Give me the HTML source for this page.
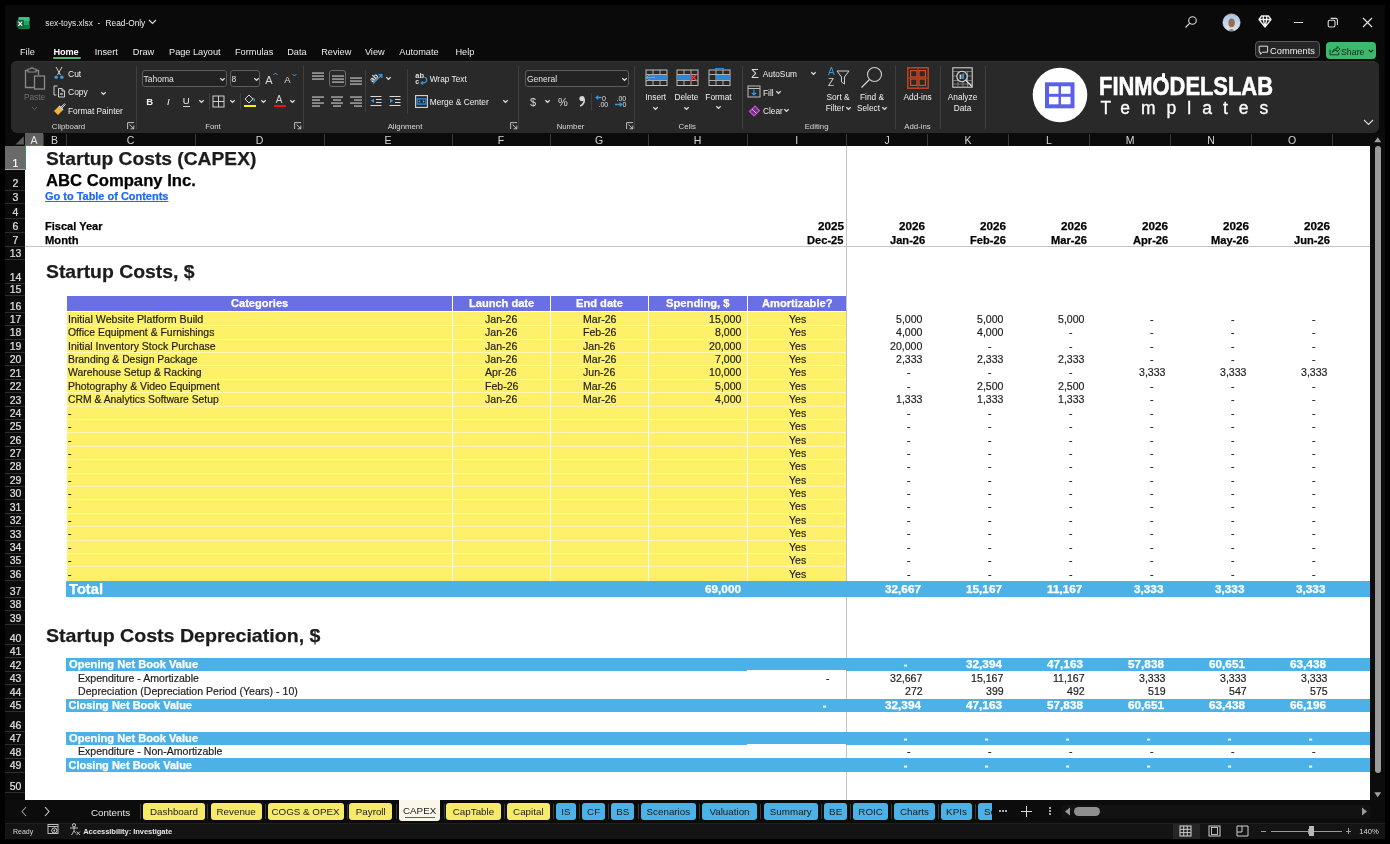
<!DOCTYPE html><html><head><meta charset="utf-8"><style>
html,body{margin:0;padding:0;}
body{width:1390px;height:844px;background:#000;position:relative;overflow:hidden;font-family:"Liberation Sans",sans-serif;}
.t{position:absolute;white-space:pre;}
#root{position:absolute;left:0;top:0;width:1390px;height:844px;will-change:transform;}
.r{position:absolute;}
svg{position:absolute;overflow:visible;}
</style></head><body><div id="root">
<div class="r" style="left:5px;top:5px;width:1380.00px;height:834.00px;background:#0a0a0a;"></div>
<svg style="left:16px;top:16px" width="14" height="14" viewBox="0 0 14 14"><rect x="2.5" y="1" width="11" height="12" rx="1.5" fill="#21a366"/><rect x="2.5" y="1" width="11" height="4" rx="1" fill="#33c481"/><rect x="2.5" y="9" width="11" height="4" rx="1" fill="#107c41"/><rect x="0.5" y="4" width="7.5" height="7.5" rx="1" fill="#185c37"/><path d="M2.3 5.6 L6.2 9.9 M6.2 5.6 L2.3 9.9" stroke="#fff" stroke-width="1.1"/></svg>
<div class="t" style="left:45.30px;top:19.00px;font-size:8.3px;line-height:8.3px;color:#e6e6e6;">sex-toys.xlsx</div>
<div class="t" style="left:97.50px;top:19.00px;font-size:8.3px;line-height:8.3px;color:#e6e6e6;">-</div>
<div class="t" style="left:105.60px;top:19.00px;font-size:8.3px;line-height:8.3px;color:#f0f0f0;">Read-Only</div>
<svg style="left:148px;top:19px" width="9" height="6"><path d="M1 1 L4.5 4.5 L8 1" stroke="#e0e0e0" stroke-width="1.1" fill="none"/></svg>
<svg style="left:1184px;top:15px" width="14" height="14"><circle cx="8.5" cy="5.5" r="3.8" stroke="#dcdcdc" stroke-width="1.1" fill="none"/><path d="M5.8 8.2 L1.5 12.5" stroke="#dcdcdc" stroke-width="1.2"/></svg>
<svg style="left:1222px;top:13px" width="19" height="19"><defs><clipPath id="av"><circle cx="9.5" cy="9.5" r="8.6"/></clipPath><linearGradient id="avg" x1="0" y1="0" x2="0" y2="1"><stop offset="0" stop-color="#a9c3e6"/><stop offset="1" stop-color="#d9e8ee"/></linearGradient></defs><circle cx="9.5" cy="9.5" r="8.6" fill="url(#avg)"/><g clip-path="url(#av)"><ellipse cx="9.6" cy="9.8" rx="3.2" ry="4.4" fill="#9c6a55"/><path d="M4 19 Q9.5 13.5 15 19 Z" fill="#7a4a40"/></g><circle cx="9.5" cy="9.5" r="8.6" stroke="#e6eef2" stroke-width="0.6" fill="none"/></svg>
<svg style="left:1258px;top:15px" width="14" height="13"><path d="M3.5 1 H10.5 L13 4.5 L7 12 L1 4.5 Z M1 4.5 H13 M5.3 1 V4.5 L7 12 M8.7 1 V4.5 L7 12" stroke="#f0f0f0" stroke-width="1.3" fill="none" stroke-linejoin="round"/></svg>
<div class="r" style="left:1294px;top:21.5px;width:8.50px;height:1.10px;background:#d8d8d8;"></div>
<svg style="left:1327px;top:17px" width="12" height="12"><rect x="1.2" y="3.2" width="6.8" height="6.8" rx="1.5" stroke="#dcdcdc" stroke-width="1.1" fill="none"/><path d="M3.6 1.4 H8.6 Q10.4 1.4 10.4 3.2 V8" stroke="#dcdcdc" stroke-width="1.1" fill="none"/></svg>
<svg style="left:1362px;top:17px" width="11" height="11"><path d="M1 1 L10 10 M10 1 L1 10" stroke="#e6e6e6" stroke-width="1.1"/></svg>
<div class="t" style="left:20.00px;top:48.00px;font-size:9.2px;line-height:9.2px;color:#ececec;">File</div>
<div class="t" style="left:53.50px;top:48.00px;font-size:9.2px;line-height:9.2px;font-weight:700;color:#ffffff;letter-spacing:-0.1px;">Home</div>
<div class="t" style="left:94.80px;top:48.00px;font-size:9.2px;line-height:9.2px;color:#ececec;">Insert</div>
<div class="t" style="left:132.80px;top:48.00px;font-size:9.2px;line-height:9.2px;color:#ececec;">Draw</div>
<div class="t" style="left:169.00px;top:48.00px;font-size:9.2px;line-height:9.2px;color:#ececec;">Page Layout</div>
<div class="t" style="left:235.00px;top:48.00px;font-size:9.2px;line-height:9.2px;color:#ececec;">Formulas</div>
<div class="t" style="left:287.20px;top:48.00px;font-size:9.2px;line-height:9.2px;color:#ececec;">Data</div>
<div class="t" style="left:321.20px;top:48.00px;font-size:9.2px;line-height:9.2px;color:#ececec;">Review</div>
<div class="t" style="left:364.90px;top:48.00px;font-size:9.2px;line-height:9.2px;color:#ececec;">View</div>
<div class="t" style="left:399.30px;top:48.00px;font-size:9.2px;line-height:9.2px;color:#ececec;">Automate</div>
<div class="t" style="left:455.40px;top:48.00px;font-size:9.2px;line-height:9.2px;color:#ececec;">Help</div>
<div class="r" style="left:53px;top:57px;width:28.00px;height:2.00px;background:#4fb56b;border-radius:1px;"></div>
<div class="r" style="left:1255px;top:41.2px;width:65.20px;height:17.30px;background:#262626;border:1px solid #5a5a5a;border-radius:4px;box-sizing:border-box;"></div>
<svg style="left:1258px;top:45px" width="11" height="11"><path d="M1.2 1.2 H9.6 V7.2 H4.4 L2.4 9.4 V7.2 H1.2 Z" stroke="#e0e0e0" stroke-width="1" fill="none" stroke-linejoin="round"/></svg>
<div class="t" style="left:1270.00px;top:47.00px;font-size:9.3px;line-height:9.3px;color:#f0f0f0;">Comments</div>
<div class="r" style="left:1325.8px;top:41.5px;width:50.20px;height:17.50px;background:#3cb96a;border-radius:4px;"></div>
<svg style="left:1328.5px;top:45px" width="12" height="11"><path d="M1 4.5 V9.8 H9.8 V7.5 M3.2 7.5 Q3.8 3.5 8 3.5 V1.5 L11 4.2 L8 7 V5.2 Q5 5.2 3.2 7.5" stroke="#143d22" stroke-width="1" fill="none" stroke-linejoin="round"/></svg>
<div class="t" style="left:1340.80px;top:47.00px;font-size:9.6px;line-height:9.6px;color:#0f2a18;transform:scaleX(0.9173);transform-origin:0 0;">Share</div>
<svg style="left:1368px;top:49px" width="6" height="4"><path d="M0.8 0.8 L3 3 L5.2 0.8" stroke="#0f2a18" stroke-width="1.2" fill="none"/></svg>
<div class="r" style="left:11px;top:61px;width:1367.70px;height:71.50px;background:#292929;border-radius:6px;box-shadow:inset 0 1px 0 #333;"></div>
<div class="r" style="left:135.8px;top:66px;width:1.00px;height:63.00px;background:#3f3f3f;"></div>
<div class="r" style="left:303.2px;top:66px;width:1.00px;height:63.00px;background:#3f3f3f;"></div>
<div class="r" style="left:518.3px;top:66px;width:1.00px;height:63.00px;background:#3f3f3f;"></div>
<div class="r" style="left:633.8px;top:66px;width:1.00px;height:63.00px;background:#3f3f3f;"></div>
<div class="r" style="left:741.8px;top:66px;width:1.00px;height:63.00px;background:#3f3f3f;"></div>
<div class="r" style="left:895px;top:66px;width:1.00px;height:63.00px;background:#3f3f3f;"></div>
<div class="r" style="left:940.4px;top:66px;width:1.00px;height:63.00px;background:#3f3f3f;"></div>
<div class="r" style="left:984.9px;top:66px;width:1.00px;height:63.00px;background:#3f3f3f;"></div>
<div class="t" style="left:51.81px;top:123.00px;font-size:7.8px;line-height:7.8px;color:#d8d8d8;">Clipboard</div>
<div class="t" style="left:205.20px;top:123.00px;font-size:7.8px;line-height:7.8px;color:#d8d8d8;">Font</div>
<div class="t" style="left:387.66px;top:123.00px;font-size:7.8px;line-height:7.8px;color:#d8d8d8;">Alignment</div>
<div class="t" style="left:556.63px;top:123.00px;font-size:7.8px;line-height:7.8px;color:#d8d8d8;">Number</div>
<div class="t" style="left:678.53px;top:123.00px;font-size:7.8px;line-height:7.8px;color:#d8d8d8;">Cells</div>
<div class="t" style="left:804.67px;top:123.00px;font-size:7.8px;line-height:7.8px;color:#d8d8d8;">Editing</div>
<div class="t" style="left:904.28px;top:123.00px;font-size:7.8px;line-height:7.8px;color:#d8d8d8;">Add-ins</div>
<svg style="left:126.5px;top:122px" width="8" height="8"><path d="M0.6 7 V0.6 H7 M2.5 2.5 L6.8 6.8 M6.8 3.6 V6.8 H3.6" stroke="#cfcfcf" stroke-width="0.9" fill="none"/></svg>
<svg style="left:294px;top:122px" width="8" height="8"><path d="M0.6 7 V0.6 H7 M2.5 2.5 L6.8 6.8 M6.8 3.6 V6.8 H3.6" stroke="#cfcfcf" stroke-width="0.9" fill="none"/></svg>
<svg style="left:509.5px;top:122px" width="8" height="8"><path d="M0.6 7 V0.6 H7 M2.5 2.5 L6.8 6.8 M6.8 3.6 V6.8 H3.6" stroke="#cfcfcf" stroke-width="0.9" fill="none"/></svg>
<svg style="left:625.5px;top:122px" width="8" height="8"><path d="M0.6 7 V0.6 H7 M2.5 2.5 L6.8 6.8 M6.8 3.6 V6.8 H3.6" stroke="#cfcfcf" stroke-width="0.9" fill="none"/></svg>
<svg style="left:1363px;top:119px" width="11" height="7"><path d="M1 1 L5.5 5.5 L10 1" stroke="#dcdcdc" stroke-width="1.1" fill="none"/></svg>
<svg style="left:24px;top:66px" width="24" height="25"><path d="M4 4.5 H1.5 V21.5 H10 M14.5 9 V4.5 H12" stroke="#8a8a8a" stroke-width="1.3" fill="none"/><path d="M4 6 V3 H6 Q8 0.8 10 3 H12 V6 Z" stroke="#8a8a8a" stroke-width="1.2" fill="none"/><rect x="10.5" y="10" width="10" height="13" stroke="#8a8a8a" stroke-width="1.3" fill="none"/></svg>
<div class="t" style="left:23.89px;top:93.00px;font-size:8.3px;line-height:8.3px;color:#6f6f6f;">Paste</div>
<svg style="left:31px;top:106px" width="7" height="5"><path d="M1 1 L3.5 3.5 L6 1" stroke="#5f5f5f" stroke-width="1" fill="none"/></svg>
<svg style="left:53px;top:66px" width="12" height="14"><path d="M3 1 L7.5 9 M9 1 L4.5 9" stroke="#d0d0d0" stroke-width="1"/><circle cx="3.2" cy="11.2" r="1.8" fill="#3a96dd"/><circle cx="8.8" cy="11.2" r="1.8" fill="#3a96dd"/></svg>
<div class="t" style="left:68.00px;top:70.00px;font-size:8.5px;line-height:8.5px;color:#f0f0f0;">Cut</div>
<svg style="left:53px;top:85px" width="13" height="13"><path d="M4.5 1 H1 V10 H3.5" stroke="#cfcfcf" stroke-width="1" fill="none"/><path d="M5.5 3.5 H9 L11.5 6 V12 H5.5 Z M9 3.5 V6 H11.5" stroke="#cfcfcf" stroke-width="1" fill="none"/><rect x="7" y="8" width="3" height="2" fill="#9a9a9a"/></svg>
<div class="t" style="left:68.00px;top:88.00px;font-size:8.5px;line-height:8.5px;color:#f0f0f0;">Copy</div>
<svg style="left:100px;top:91px" width="7" height="5"><path d="M1.3 1.2 L3.5 3.3 L5.7 1.2" stroke="#d8d8d8" stroke-width="1.25" fill="none"/></svg>
<svg style="left:53px;top:103px" width="13" height="13"><path d="M1 8 L5 12 L9.5 7.5 L5.5 3.5 Z" fill="#f0b43a"/><path d="M5.5 3.5 L9.5 7.5 L10.5 6.5 L6.5 2.5 Z" fill="#e8e8e8"/><path d="M8 4 L11.5 0.8 L12.3 1.6 L9 5" stroke="#e0e0e0" stroke-width="1" fill="none"/></svg>
<div class="t" style="left:68.00px;top:107.00px;font-size:8.3px;line-height:8.3px;color:#f0f0f0;">Format Painter</div>
<div class="r" style="left:141.7px;top:70.4px;width:85.60px;height:16.50px;background:#232323;border:1px solid #5c5c5c;border-radius:3px;box-sizing:border-box;"></div>
<div class="t" style="left:143.50px;top:75.00px;font-size:8.5px;line-height:8.5px;color:#e6e6e6;">Tahoma</div>
<div class="r" style="left:229.7px;top:70.4px;width:30.60px;height:16.50px;background:#232323;border:1px solid #5c5c5c;border-radius:3px;box-sizing:border-box;"></div>
<div class="t" style="left:231.50px;top:75.00px;font-size:8.5px;line-height:8.5px;color:#e6e6e6;">8</div>
<svg style="left:219px;top:77px" width="7" height="5"><path d="M1.3 1.2 L3.5 3.3 L5.7 1.2" stroke="#d8d8d8" stroke-width="1.25" fill="none"/></svg>
<svg style="left:253px;top:77px" width="7" height="5"><path d="M1.3 1.2 L3.5 3.3 L5.7 1.2" stroke="#d8d8d8" stroke-width="1.25" fill="none"/></svg>
<div class="t" style="left:265.33px;top:75.00px;font-size:11px;line-height:11px;color:#dcdcdc;">A</div>
<svg style="left:273px;top:72px" width="5" height="4"><path d="M0.5 3 L2.5 1 L4.5 3" stroke="#4aa3e8" stroke-width="0.9" fill="none"/></svg>
<div class="t" style="left:284.33px;top:75.00px;font-size:9.5px;line-height:9.5px;color:#dcdcdc;">A</div>
<svg style="left:291.5px;top:73px" width="5" height="4"><path d="M0.5 1 L2.5 3 L4.5 1" stroke="#4aa3e8" stroke-width="0.9" fill="none"/></svg>
<div class="t" style="left:146.37px;top:97.00px;font-size:9.5px;line-height:9.5px;font-weight:700;color:#f0f0f0;">B</div>
<div class="t" style="left:166.88px;top:97.00px;font-size:9.5px;line-height:9.5px;color:#f0f0f0;font-style:italic;">I</div>
<div class="t" style="left:182.77px;top:96.00px;font-size:9.5px;line-height:9.5px;color:#f0f0f0;">U</div>
<div class="r" style="left:182.5px;top:106px;width:7.50px;height:1.00px;background:#cfcfcf;"></div>
<svg style="left:197.5px;top:99px" width="7" height="5"><path d="M1.3 1.2 L3.5 3.3 L5.7 1.2" stroke="#d8d8d8" stroke-width="1.25" fill="none"/></svg>
<svg style="left:228.5px;top:99px" width="7" height="5"><path d="M1.3 1.2 L3.5 3.3 L5.7 1.2" stroke="#d8d8d8" stroke-width="1.25" fill="none"/></svg>
<svg style="left:259.5px;top:99px" width="7" height="5"><path d="M1.3 1.2 L3.5 3.3 L5.7 1.2" stroke="#d8d8d8" stroke-width="1.25" fill="none"/></svg>
<svg style="left:288.5px;top:99px" width="7" height="5"><path d="M1.3 1.2 L3.5 3.3 L5.7 1.2" stroke="#d8d8d8" stroke-width="1.25" fill="none"/></svg>
<div class="r" style="left:208.5px;top:93px;width:1.00px;height:17.00px;background:#3f3f3f;"></div>
<div class="r" style="left:239.5px;top:93px;width:1.00px;height:17.00px;background:#3f3f3f;"></div>
<svg style="left:212px;top:95px" width="13" height="13"><rect x="1" y="1" width="11" height="11" stroke="#cfcfcf" stroke-width="1" fill="none"/><path d="M6.5 1 V12 M1 6.5 H12" stroke="#cfcfcf" stroke-width="1"/></svg>
<svg style="left:243px;top:94px" width="13" height="10"><path d="M2 5 L6 1 L10 5 L6 9 Z" stroke="#d8d8d8" stroke-width="1" fill="none"/><path d="M10.5 4 Q12 6 11 7.5" stroke="#4aa3e8" stroke-width="1.2" fill="none"/></svg>
<div class="r" style="left:243.5px;top:104.5px;width:12.00px;height:2.80px;background:#ffee00;"></div>
<div class="t" style="left:275.66px;top:95.00px;font-size:10px;line-height:10px;color:#d8d8d8;">A</div>
<div class="r" style="left:273.5px;top:104.5px;width:12.00px;height:2.80px;background:#ee1111;"></div>
<svg style="left:311px;top:71px" width="14" height="12"><rect x="1" y="1.5" width="12" height="1.1" fill="#d0d0d0"/><rect x="1" y="4.5" width="12" height="1.1" fill="#d0d0d0"/><rect x="1" y="7.5" width="12" height="1.1" fill="#d0d0d0"/></svg>
<div class="r" style="left:328.5px;top:70.3px;width:17.50px;height:16.60px;background:transparent;border:1.2px solid #6a6a6a;border-radius:3px;box-sizing:border-box;"></div>
<svg style="left:330.5px;top:73.5px" width="14" height="12"><rect x="1" y="1.5" width="12" height="1.1" fill="#d0d0d0"/><rect x="1" y="4.5" width="12" height="1.1" fill="#d0d0d0"/><rect x="1" y="7.5" width="12" height="1.1" fill="#d0d0d0"/></svg>
<svg style="left:348.5px;top:76px" width="14" height="12"><rect x="1" y="1.5" width="12" height="1.1" fill="#d0d0d0"/><rect x="1" y="4.5" width="12" height="1.1" fill="#d0d0d0"/><rect x="1" y="7.5" width="12" height="1.1" fill="#d0d0d0"/></svg>
<svg style="left:311px;top:95px" width="14" height="12"><rect x="1" y="1.5" width="12" height="1.1" fill="#d0d0d0"/><rect x="1" y="4.5" width="8" height="1.1" fill="#d0d0d0"/><rect x="1" y="7.5" width="12" height="1.1" fill="#d0d0d0"/><rect x="1" y="10.5" width="8" height="1.1" fill="#d0d0d0"/></svg>
<svg style="left:330px;top:95px" width="14" height="12"><rect x="1.0" y="1.5" width="12" height="1.1" fill="#d0d0d0"/><rect x="3.0" y="4.5" width="8" height="1.1" fill="#d0d0d0"/><rect x="1.0" y="7.5" width="12" height="1.1" fill="#d0d0d0"/><rect x="3.0" y="10.5" width="8" height="1.1" fill="#d0d0d0"/></svg>
<svg style="left:348.5px;top:95px" width="14" height="12"><rect x="1" y="1.5" width="12" height="1.1" fill="#d0d0d0"/><rect x="5" y="4.5" width="8" height="1.1" fill="#d0d0d0"/><rect x="1" y="7.5" width="12" height="1.1" fill="#d0d0d0"/><rect x="5" y="10.5" width="8" height="1.1" fill="#d0d0d0"/></svg>
<div class="r" style="left:365px;top:70px;width:1.00px;height:42.00px;background:#3f3f3f;"></div>
<div class="r" style="left:407.2px;top:69px;width:1.00px;height:45.00px;background:#3f3f3f;"></div>
<svg style="left:369px;top:71px" width="16" height="14"><g transform="rotate(-45 5 6)"><text x="0" y="9" font-size="7.5" font-weight="700" fill="#e8e8e8" font-family="Liberation Sans">ab</text></g><path d="M4 12.5 L12.5 4 M9.3 3.6 H12.8 V7.1" stroke="#3a96dd" stroke-width="1.3" fill="none"/></svg>
<svg style="left:385px;top:76px" width="7" height="5"><path d="M1.3 1.2 L3.5 3.3 L5.7 1.2" stroke="#d8d8d8" stroke-width="1.25" fill="none"/></svg>
<svg style="left:370px;top:95px" width="12" height="12"><rect x="0.5" y="1" width="11" height="1" fill="#d8d8d8"/><rect x="6" y="4" width="5.5" height="1" fill="#d8d8d8"/><rect x="6" y="7" width="5.5" height="1" fill="#d8d8d8"/><rect x="0.5" y="10" width="11" height="1" fill="#d8d8d8"/><path d="M0.8 5.8 L4 3.6 V8 Z" fill="#3a96dd"/></svg>
<svg style="left:389px;top:95px" width="12" height="12"><rect x="0.5" y="1" width="11" height="1" fill="#d8d8d8"/><rect x="6" y="4" width="5.5" height="1" fill="#d8d8d8"/><rect x="6" y="7" width="5.5" height="1" fill="#d8d8d8"/><rect x="0.5" y="10" width="11" height="1" fill="#d8d8d8"/><path d="M4.2 5.8 L1 3.6 V8 Z" fill="#3a96dd"/></svg>
<svg style="left:415px;top:71px" width="14" height="14"><text x="0.3" y="7" font-size="7.5" font-weight="700" fill="#e0e0e0" font-family="Liberation Sans">ab</text><text x="0.3" y="13" font-size="7" font-weight="700" fill="#e0e0e0" font-family="Liberation Sans">c</text><path d="M9.5 6 Q12.8 7.5 11.2 10.6 Q10 12.2 6.5 12" stroke="#3a96dd" stroke-width="1.3" fill="none"/><path d="M8 10.3 L6 12 L8 13.6" stroke="#3a96dd" stroke-width="1.1" fill="none"/></svg>
<div class="t" style="left:429.70px;top:75.00px;font-size:8.3px;line-height:8.3px;color:#f0f0f0;">Wrap Text</div>
<svg style="left:414.5px;top:94.5px" width="13" height="13"><rect x="0.6" y="0.6" width="11.8" height="11.8" stroke="#d8d8d8" stroke-width="1.1" fill="none"/><rect x="1.5" y="3.2" width="10" height="6.6" fill="#2d8ad8"/><rect x="2.8" y="4.6" width="7.4" height="3.8" fill="#1c2a36"/><path d="M3.3 6.5 L5.2 5 V8 Z M9.7 6.5 L7.8 5 V8 Z" fill="#4aaaf0"/></svg>
<div class="t" style="left:429.70px;top:98.00px;font-size:8.4px;line-height:8.4px;color:#f0f0f0;">Merge &amp; Center</div>
<svg style="left:502px;top:99px" width="7" height="5"><path d="M1.3 1.2 L3.5 3.3 L5.7 1.2" stroke="#d8d8d8" stroke-width="1.25" fill="none"/></svg>
<div class="r" style="left:525px;top:70px;width:104.20px;height:16.50px;background:#232323;border:1px solid #5c5c5c;border-radius:3px;box-sizing:border-box;"></div>
<div class="t" style="left:527.00px;top:75.00px;font-size:8.5px;line-height:8.5px;color:#e6e6e6;">General</div>
<svg style="left:621px;top:77px" width="7" height="5"><path d="M1.3 1.2 L3.5 3.3 L5.7 1.2" stroke="#d8d8d8" stroke-width="1.25" fill="none"/></svg>
<div class="t" style="left:529.94px;top:97.00px;font-size:11px;line-height:11px;color:#d8d8d8;">$</div>
<svg style="left:544px;top:99px" width="7" height="5"><path d="M1.3 1.2 L3.5 3.3 L5.7 1.2" stroke="#d8d8d8" stroke-width="1.25" fill="none"/></svg>
<div class="t" style="left:558.11px;top:97.00px;font-size:11px;line-height:11px;color:#d8d8d8;">%</div>
<svg style="left:578px;top:95px" width="8" height="12"><circle cx="4" cy="3.6" r="2.6" fill="#d8d8d8"/><path d="M6.3 4 Q6.6 9 2.2 11" stroke="#d8d8d8" stroke-width="1.5" fill="none"/></svg>
<div class="r" style="left:591px;top:93px;width:1.00px;height:17.00px;background:#3f3f3f;"></div>
<svg style="left:595px;top:94px" width="15" height="15"><text x="7" y="6.5" font-size="7" fill="#e0e0e0" font-family="Liberation Sans">0</text><text x="3.5" y="13" font-size="7" fill="#e0e0e0" font-family="Liberation Sans">.00</text><path d="M1.5 3.5 H6.5 M3.2 1.6 L1.2 3.5 L3.2 5.4" stroke="#3a96dd" stroke-width="1.3" fill="none"/></svg>
<svg style="left:613px;top:94px" width="15" height="15"><text x="3.5" y="6.5" font-size="7" fill="#e0e0e0" font-family="Liberation Sans">.00</text><text x="9.5" y="13" font-size="7" fill="#e0e0e0" font-family="Liberation Sans">0</text><path d="M2 10.5 H8.5 M6.8 8.6 L8.8 10.5 L6.8 12.4" stroke="#3a96dd" stroke-width="1.3" fill="none"/></svg>
<svg style="left:644.5px;top:68px" width="23" height="20"><rect x="1" y="2" width="21" height="15.5" stroke="#bdbdbd" stroke-width="1" fill="none"/><path d="M1 6.5 H22 M1 12.5 H22 M8 2 V17.5 M15 2 V17.5" stroke="#bdbdbd" stroke-width="0.9"/><rect x="4" y="7" width="18" height="5" fill="#2b88d8"/><path d="M10 9.5 H1.5 M4.5 6.8 L1.5 9.5 L4.5 12.2" stroke="#4fb0f0" stroke-width="1.2" fill="none"/></svg>
<svg style="left:675.5px;top:68px" width="23" height="20"><rect x="1" y="2" width="21" height="15.5" stroke="#bdbdbd" stroke-width="1" fill="none"/><path d="M1 6.5 H22 M1 12.5 H22 M8 2 V17.5 M15 2 V17.5" stroke="#bdbdbd" stroke-width="0.9"/><rect x="1.5" y="7" width="13" height="5" fill="#2b88d8"/><path d="M14 6 L21 13 M21 6 L14 13" stroke="#e8463a" stroke-width="1.3"/></svg>
<svg style="left:707.5px;top:68px" width="23" height="20"><rect x="1" y="2" width="21" height="15.5" stroke="#bdbdbd" stroke-width="1" fill="none"/><path d="M1 6.5 H22 M1 12.5 H22 M8 2 V17.5 M15 2 V17.5" stroke="#bdbdbd" stroke-width="0.9"/><rect x="8" y="7" width="14" height="5" fill="#2b88d8"/><rect x="7" y="0" width="9" height="1.2" fill="#2b88d8"/></svg>
<div class="t" style="left:645.32px;top:93.00px;font-size:8.3px;line-height:8.3px;color:#f0f0f0;">Insert</div>
<div class="t" style="left:674.50px;top:93.00px;font-size:8.3px;line-height:8.3px;color:#f0f0f0;">Delete</div>
<div class="t" style="left:705.36px;top:93.00px;font-size:8.3px;line-height:8.3px;color:#f0f0f0;">Format</div>
<svg style="left:652.2px;top:106px" width="7" height="5"><path d="M1.3 1.2 L3.5 3.3 L5.7 1.2" stroke="#d8d8d8" stroke-width="1.25" fill="none"/></svg>
<svg style="left:683.0px;top:106px" width="7" height="5"><path d="M1.3 1.2 L3.5 3.3 L5.7 1.2" stroke="#d8d8d8" stroke-width="1.25" fill="none"/></svg>
<svg style="left:715.0px;top:105px" width="7" height="5"><path d="M1.3 1.2 L3.5 3.3 L5.7 1.2" stroke="#d8d8d8" stroke-width="1.25" fill="none"/></svg>
<div class="t" style="left:750.54px;top:67.00px;font-size:13.5px;line-height:13.5px;color:#dcdcdc;transform:scaleX(0.9500);transform-origin:0 0;">&#931;</div>
<div class="t" style="left:762.80px;top:70.00px;font-size:8.3px;line-height:8.3px;color:#f0f0f0;">AutoSum</div>
<svg style="left:810px;top:71px" width="7" height="5"><path d="M1.3 1.2 L3.5 3.3 L5.7 1.2" stroke="#d8d8d8" stroke-width="1.25" fill="none"/></svg>
<svg style="left:747px;top:85px" width="14" height="13"><rect x="1" y="1" width="12" height="11" stroke="#bdbdbd" stroke-width="1" fill="none"/><path d="M1 3.5 H13" stroke="#bdbdbd" stroke-width="1"/><path d="M7 4.5 V10 M4.8 7.8 L7 10 L9.2 7.8" stroke="#3a96dd" stroke-width="1.2" fill="none"/></svg>
<div class="t" style="left:763.00px;top:89.00px;font-size:8.3px;line-height:8.3px;color:#f0f0f0;">Fill</div>
<svg style="left:775px;top:90px" width="7" height="5"><path d="M1.3 1.2 L3.5 3.3 L5.7 1.2" stroke="#d8d8d8" stroke-width="1.25" fill="none"/></svg>
<svg style="left:748px;top:104px" width="13" height="13"><path d="M1.5 7.5 L7 2 L11.5 6.5 L6 12 Z" stroke="#c34fd6" stroke-width="1.2" fill="#a238b8" fill-opacity="0.6"/><path d="M4 5 L8.5 9.5" stroke="#e0a0f0" stroke-width="1"/></svg>
<div class="t" style="left:763.00px;top:107.00px;font-size:8.3px;line-height:8.3px;color:#f0f0f0;">Clear</div>
<svg style="left:783px;top:108px" width="7" height="5"><path d="M1.3 1.2 L3.5 3.3 L5.7 1.2" stroke="#d8d8d8" stroke-width="1.25" fill="none"/></svg>
<svg style="left:827px;top:66px" width="24" height="23"><text x="1" y="9" font-size="10" fill="#3a96dd" font-family="Liberation Sans">A</text><text x="1" y="20" font-size="10" fill="#d0d0d0" font-family="Liberation Sans">Z</text><path d="M10 5 H22 L17.5 11 V18 L14.5 16 V11 Z" stroke="#d0d0d0" stroke-width="1" fill="none" stroke-linejoin="round"/></svg>
<div class="t" style="left:826.47px;top:93.00px;font-size:8.3px;line-height:8.3px;color:#f0f0f0;">Sort &amp;</div>
<div class="t" style="left:825.78px;top:104.00px;font-size:8.3px;line-height:8.3px;color:#f0f0f0;">Filter</div>
<svg style="left:845px;top:106px" width="7" height="5"><path d="M1.3 1.2 L3.5 3.3 L5.7 1.2" stroke="#d8d8d8" stroke-width="1.25" fill="none"/></svg>
<svg style="left:860px;top:66px" width="24" height="23"><circle cx="14.5" cy="8.5" r="7" stroke="#d0d0d0" stroke-width="1.1" fill="none"/><path d="M9.5 13.5 L1.5 21.5" stroke="#d0d0d0" stroke-width="1.2"/></svg>
<div class="t" style="left:860.01px;top:93.00px;font-size:8.3px;line-height:8.3px;color:#f0f0f0;">Find &amp;</div>
<div class="t" style="left:856.97px;top:104.00px;font-size:8.3px;line-height:8.3px;color:#f0f0f0;">Select</div>
<svg style="left:881px;top:106px" width="7" height="5"><path d="M1.3 1.2 L3.5 3.3 L5.7 1.2" stroke="#d8d8d8" stroke-width="1.25" fill="none"/></svg>
<svg style="left:906.5px;top:66.5px" width="22" height="22"><rect x="0.8" y="0.8" width="20.4" height="20.4" fill="none" stroke="#c8461e" stroke-width="1.4"/><rect x="3.6" y="3.6" width="6.4" height="6.4" fill="none" stroke="#d44e22" stroke-width="1.2"/><rect x="12" y="3.6" width="6.4" height="6.4" fill="none" stroke="#d44e22" stroke-width="1.2"/><rect x="3.6" y="12" width="6.4" height="6.4" fill="none" stroke="#d44e22" stroke-width="1.2"/><rect x="12" y="12" width="6.4" height="6.4" fill="none" stroke="#d44e22" stroke-width="1.2"/><path d="M11 1 V21 M1 11 H21" stroke="#b8401c" stroke-width="1"/></svg>
<div class="t" style="left:903.53px;top:93.00px;font-size:8.3px;line-height:8.3px;color:#f0f0f0;">Add-ins</div>
<svg style="left:952px;top:67px" width="22" height="22"><rect x="0.8" y="0.8" width="19.4" height="19.4" stroke="#d0d0d0" stroke-width="1.1" fill="none"/><path d="M1 4.5 H20 M1 9 H20 M1 13.5 H20 M1 17 H20 M6 4.5 V20 M11 13.5 V20 M15.5 4.5 V20" stroke="#9a9a9a" stroke-width="0.7"/><circle cx="10" cy="9.5" r="5.2" stroke="#e0e0e0" stroke-width="1.1" fill="#292929"/><rect x="7.6" y="7.5" width="1.8" height="4.5" fill="#d0d0d0"/><rect x="10.2" y="6.5" width="1.9" height="5.5" fill="#3a96dd"/><path d="M14 13.5 L20 19.5" stroke="#e0e0e0" stroke-width="1.3"/></svg>
<div class="t" style="left:947.74px;top:93.00px;font-size:8.3px;line-height:8.3px;color:#f0f0f0;">Analyze</div>
<div class="t" style="left:953.73px;top:104.00px;font-size:8.3px;line-height:8.3px;color:#f0f0f0;">Data</div>
<svg style="left:1032px;top:67px" width="56" height="56"><circle cx="28" cy="28" r="27.3" fill="#ffffff"/><rect x="13" y="15.3" width="29.5" height="26" fill="#5b60e6"/><rect x="17" y="19.3" width="9.5" height="7.5" fill="#fff"/><rect x="29" y="19.3" width="9.5" height="7.5" fill="#fff"/><rect x="17" y="29.8" width="9.5" height="7.5" fill="#fff"/><rect x="29" y="29.8" width="9.5" height="7.5" fill="#fff"/></svg>
<div class="t" style="left:1098.60px;top:73.00px;font-size:26px;line-height:26px;font-weight:700;color:#ffffff;transform:scaleX(0.8424);transform-origin:0 0;-webkit-text-stroke:0.6px #fff;">FINMODELSLAB</div>
<div class="r" style="left:1161.8px;top:72.5px;width:2.80px;height:9.50px;background:#ffffff;border-radius:1px;"></div>
<div class="t" style="left:1100.50px;top:100.00px;font-size:17.5px;line-height:17.5px;color:#ffffff;letter-spacing:11.0px;-webkit-text-stroke:0.3px #fff;">Templates</div>
<div class="r" style="left:5px;top:800px;width:1380.00px;height:22.50px;background:#0c0c0c;"></div>
<svg style="left:20px;top:806px" width="8" height="11"><path d="M6 1 L2 5.5 L6 10" stroke="#9a9a9a" stroke-width="1.1" fill="none"/></svg>
<svg style="left:43px;top:806px" width="8" height="11"><path d="M2 1 L6 5.5 L2 10" stroke="#d0d0d0" stroke-width="1.1" fill="none"/></svg>
<div class="t" style="left:90.89px;top:808.00px;font-size:9.8px;line-height:9.8px;color:#e6e6e6;">Contents</div>
<div class="r" style="left:139.7px;top:804px;width:1.00px;height:15.00px;background:#3a3a3a;"></div>
<div class="r" style="left:207.3px;top:804px;width:1.00px;height:15.00px;background:#3a3a3a;"></div>
<div class="r" style="left:264.6px;top:804px;width:1.00px;height:15.00px;background:#3a3a3a;"></div>
<div class="r" style="left:346.5px;top:804px;width:1.00px;height:15.00px;background:#3a3a3a;"></div>
<div class="r" style="left:395.5px;top:804px;width:1.00px;height:15.00px;background:#3a3a3a;"></div>
<div class="r" style="left:443.5px;top:804px;width:1.00px;height:15.00px;background:#3a3a3a;"></div>
<div class="r" style="left:503.5px;top:804px;width:1.00px;height:15.00px;background:#3a3a3a;"></div>
<div class="r" style="left:553px;top:804px;width:1.00px;height:15.00px;background:#3a3a3a;"></div>
<div class="r" style="left:579px;top:804px;width:1.00px;height:15.00px;background:#3a3a3a;"></div>
<div class="r" style="left:608.3px;top:804px;width:1.00px;height:15.00px;background:#3a3a3a;"></div>
<div class="r" style="left:637.5px;top:804px;width:1.00px;height:15.00px;background:#3a3a3a;"></div>
<div class="r" style="left:698.8px;top:804px;width:1.00px;height:15.00px;background:#3a3a3a;"></div>
<div class="r" style="left:760.4px;top:804px;width:1.00px;height:15.00px;background:#3a3a3a;"></div>
<div class="r" style="left:821px;top:804px;width:1.00px;height:15.00px;background:#3a3a3a;"></div>
<div class="r" style="left:850.2px;top:804px;width:1.00px;height:15.00px;background:#3a3a3a;"></div>
<div class="r" style="left:890.9px;top:804px;width:1.00px;height:15.00px;background:#3a3a3a;"></div>
<div class="r" style="left:937.9px;top:804px;width:1.00px;height:15.00px;background:#3a3a3a;"></div>
<div class="r" style="left:974.6px;top:804px;width:1.00px;height:15.00px;background:#3a3a3a;"></div>
<div class="r" style="left:143.2px;top:802.9px;width:61.60px;height:16.80px;background:#f7ea6a;border-radius:3px;"></div>
<div class="t" style="left:150.03px;top:807.00px;font-size:9.8px;line-height:9.8px;color:#1b1b1b;">Dashboard</div>
<div class="r" style="left:210.6px;top:802.9px;width:51.10px;height:16.80px;background:#f7ea6a;border-radius:3px;"></div>
<div class="t" style="left:216.54px;top:807.00px;font-size:9.8px;line-height:9.8px;color:#1b1b1b;">Revenue</div>
<div class="r" style="left:267.5px;top:802.9px;width:76.10px;height:16.80px;background:#f7ea6a;border-radius:3px;"></div>
<div class="t" style="left:271.51px;top:807.00px;font-size:9.8px;line-height:9.8px;color:#1b1b1b;">COGS &amp; OPEX</div>
<div class="r" style="left:349.4px;top:802.9px;width:42.70px;height:16.80px;background:#f7ea6a;border-radius:3px;"></div>
<div class="t" style="left:355.77px;top:807.00px;font-size:9.8px;line-height:9.8px;color:#1b1b1b;">Payroll</div>
<div class="r" style="left:446.3px;top:802.9px;width:54.40px;height:16.80px;background:#f7ea6a;border-radius:3px;"></div>
<div class="t" style="left:452.80px;top:807.00px;font-size:9.8px;line-height:9.8px;color:#1b1b1b;">CapTable</div>
<div class="r" style="left:506.5px;top:802.9px;width:43.70px;height:16.80px;background:#f7ea6a;border-radius:3px;"></div>
<div class="t" style="left:513.10px;top:807.00px;font-size:9.8px;line-height:9.8px;color:#1b1b1b;">Capital</div>
<div class="r" style="left:556px;top:802.9px;width:20.00px;height:16.80px;background:#4cb1e6;border-radius:3px;"></div>
<div class="t" style="left:561.37px;top:807.00px;font-size:9.8px;line-height:9.8px;color:#1b1b1b;">IS</div>
<div class="r" style="left:582.2px;top:802.9px;width:22.90px;height:16.80px;background:#4cb1e6;border-radius:3px;"></div>
<div class="t" style="left:587.12px;top:807.00px;font-size:9.8px;line-height:9.8px;color:#1b1b1b;">CF</div>
<div class="r" style="left:611.4px;top:802.9px;width:22.90px;height:16.80px;background:#4cb1e6;border-radius:3px;"></div>
<div class="t" style="left:616.31px;top:807.00px;font-size:9.8px;line-height:9.8px;color:#1b1b1b;">BS</div>
<div class="r" style="left:640.7px;top:802.9px;width:55.30px;height:16.80px;background:#4cb1e6;border-radius:3px;"></div>
<div class="t" style="left:646.56px;top:807.00px;font-size:9.8px;line-height:9.8px;color:#1b1b1b;">Scenarios</div>
<div class="r" style="left:701.8px;top:802.9px;width:55.40px;height:16.80px;background:#4cb1e6;border-radius:3px;"></div>
<div class="t" style="left:709.43px;top:807.00px;font-size:9.8px;line-height:9.8px;color:#1b1b1b;">Valuation</div>
<div class="r" style="left:763.6px;top:802.9px;width:54.40px;height:16.80px;background:#4cb1e6;border-radius:3px;"></div>
<div class="t" style="left:769.84px;top:807.00px;font-size:9.8px;line-height:9.8px;color:#1b1b1b;">Summary</div>
<div class="r" style="left:824.2px;top:802.9px;width:22.90px;height:16.80px;background:#4cb1e6;border-radius:3px;"></div>
<div class="t" style="left:829.11px;top:807.00px;font-size:9.8px;line-height:9.8px;color:#1b1b1b;">BE</div>
<div class="r" style="left:853.3px;top:802.9px;width:34.60px;height:16.80px;background:#4cb1e6;border-radius:3px;"></div>
<div class="t" style="left:858.35px;top:807.00px;font-size:9.8px;line-height:9.8px;color:#1b1b1b;">ROIC</div>
<div class="r" style="left:894px;top:802.9px;width:40.80px;height:16.80px;background:#4cb1e6;border-radius:3px;"></div>
<div class="t" style="left:899.97px;top:807.00px;font-size:9.8px;line-height:9.8px;color:#1b1b1b;">Charts</div>
<div class="r" style="left:941.2px;top:802.9px;width:30.50px;height:16.80px;background:#4cb1e6;border-radius:3px;"></div>
<div class="t" style="left:946.10px;top:807.00px;font-size:9.8px;line-height:9.8px;color:#1b1b1b;">KPIs</div>
<div style="position:absolute;left:978px;top:802.9px;width:14.2px;height:16.8px;overflow:hidden;"><div style="position:absolute;left:0;top:0;width:40px;height:16.8px;background:#4cb1e6;border-radius:3px;"></div><div class="t" style="left:6px;top:4.20px;font-size:9.8px;line-height:9.8px;color:#1b1b1b">Scenarios</div></div>
<div class="r" style="left:398.7px;top:800px;width:41.80px;height:20.50px;background:#faf7ea;border-radius:0 0 3px 3px;"></div>
<div class="t" style="left:402.99px;top:806.00px;font-size:9.8px;line-height:9.8px;color:#1b1b1b;">CAPEX</div>
<div class="r" style="left:404.5px;top:816.5px;width:30.00px;height:1.70px;background:#1f8a3a;"></div>
<div class="r" style="left:999.4px;top:810.2px;width:1.80px;height:1.80px;background:#e0e0e0;border-radius:1px;"></div>
<div class="r" style="left:1002.4px;top:810.2px;width:1.80px;height:1.80px;background:#e0e0e0;border-radius:1px;"></div>
<div class="r" style="left:1005.4px;top:810.2px;width:1.80px;height:1.80px;background:#e0e0e0;border-radius:1px;"></div>
<div class="r" style="left:1020.5px;top:810.5px;width:11.00px;height:1.10px;background:#d8d8d8;"></div>
<div class="r" style="left:1025.5px;top:805.5px;width:1.10px;height:11.00px;background:#d8d8d8;"></div>
<div class="r" style="left:1049px;top:807.3px;width:1.80px;height:1.80px;background:#d8d8d8;border-radius:1px;"></div>
<div class="r" style="left:1049px;top:810.3px;width:1.80px;height:1.80px;background:#d8d8d8;border-radius:1px;"></div>
<div class="r" style="left:1049px;top:813.3px;width:1.80px;height:1.80px;background:#d8d8d8;border-radius:1px;"></div>
<div class="r" style="left:1062px;top:804.5px;width:308.00px;height:13.00px;background:#121212;"></div>
<svg style="left:1064px;top:807px" width="7" height="9"><path d="M6 0.5 V8.5 L1 4.5 Z" fill="#9a9a9a"/></svg>
<div class="r" style="left:1074.2px;top:806.5px;width:25.80px;height:9.00px;background:#8f8f8f;border-radius:5px;"></div>
<svg style="left:1361px;top:807px" width="7" height="9"><path d="M1 0.5 V8.5 L6 4.5 Z" fill="#9a9a9a"/></svg>
<div class="r" style="left:1370px;top:133px;width:15.00px;height:667.00px;background:#0c0c0c;"></div>
<svg style="left:1374px;top:136.5px" width="7.5" height="5.5"><path d="M0.3 5.2 L3.7 0.3 L7.2 5.2 Z" fill="#a0a0a0"/></svg>
<div class="r" style="left:1374.6px;top:145.5px;width:6.10px;height:627.90px;background:#9a9a9a;border-radius:3px;"></div>
<svg style="left:1374px;top:792px" width="7.5" height="5.5"><path d="M0.3 0.3 L3.7 5.2 L7.2 0.3 Z" fill="#a0a0a0"/></svg>
<div class="r" style="left:5px;top:822.5px;width:1380.00px;height:1.00px;background:#202020;"></div>
<div class="r" style="left:5px;top:823.5px;width:1380.00px;height:15.50px;background:#141414;"></div>
<div class="t" style="left:13.00px;top:828.00px;font-size:7.6px;line-height:7.6px;color:#d8d8d8;transform:scaleX(0.9240);transform-origin:0 0;">Ready</div>
<svg style="left:47px;top:823px" width="12" height="12"><rect x="1" y="1.5" width="10" height="9" stroke="#bdbdbd" stroke-width="1" fill="none"/><path d="M1 3.5 H11" stroke="#bdbdbd"/><circle cx="7.3" cy="7.5" r="2.6" stroke="#d0d0d0" stroke-width="1" fill="#141414"/><circle cx="7.3" cy="7.5" r="0.9" fill="#d0d0d0"/></svg>
<svg style="left:69px;top:823px" width="12" height="13"><circle cx="5" cy="2.2" r="1.6" stroke="#d0d0d0" stroke-width="0.9" fill="none"/><path d="M1 5 H9 M5 4 V8 L2.5 12 M5 8 L7 10.5" stroke="#d0d0d0" stroke-width="0.9" fill="none"/><path d="M7.5 8.5 L11 12 M11 8.5 L7.5 12" stroke="#d0d0d0" stroke-width="0.9"/></svg>
<div class="t" style="left:83.20px;top:828.00px;font-size:7.55px;line-height:7.55px;font-weight:700;color:#e6e6e6;letter-spacing:-0.05px;">Accessibility: Investigate</div>
<div class="r" style="left:1173.3px;top:823.5px;width:26.70px;height:15.00px;background:#262626;"></div>
<svg style="left:1179px;top:825px" width="13" height="12"><rect x="1" y="1" width="11" height="10" stroke="#d8d8d8" stroke-width="1" fill="none"/><path d="M4.7 1 V11 M8.3 1 V11 M1 4.3 H12 M1 7.6 H12" stroke="#d8d8d8" stroke-width="0.9"/></svg>
<svg style="left:1208px;top:825px" width="13" height="12"><rect x="1" y="1" width="11" height="10" stroke="#cfcfcf" stroke-width="1" fill="none"/><rect x="3.5" y="2.5" width="6" height="7" stroke="#cfcfcf" stroke-width="0.9" fill="none"/></svg>
<svg style="left:1236px;top:825px" width="13" height="12"><path d="M1 1 H12 V11 H1 Z M1 7 H6 V1" stroke="#cfcfcf" stroke-width="1" fill="none"/></svg>
<div class="r" style="left:1260.5px;top:830.5px;width:5.50px;height:1.00px;background:#9a9a9a;"></div>
<div class="r" style="left:1271px;top:830.5px;width:70.70px;height:1.10px;background:#9a9a9a;"></div>
<div class="r" style="left:1309px;top:826px;width:4.50px;height:10.00px;background:#b8b8b8;"></div>
<div class="r" style="left:1307.5px;top:828.5px;width:1.00px;height:5.00px;background:#9a9a9a;"></div>
<div class="r" style="left:1345.5px;top:830.5px;width:5.50px;height:1.00px;background:#9a9a9a;"></div>
<div class="r" style="left:1347.7px;top:828px;width:1.10px;height:6.00px;background:#9a9a9a;"></div>
<div class="t" style="left:1359.36px;top:828.00px;font-size:7.6px;line-height:7.6px;color:#d8d8d8;">140%</div>
<div class="r" style="left:25px;top:146px;width:1345.00px;height:654.00px;background:#ffffff;"></div>
<div class="r" style="left:5px;top:133px;width:1365.00px;height:13.00px;background:#0b0b0b;"></div>
<svg style="left:5px;top:133px" width="20" height="13"><polygon points="18.8,3.2 18.8,11.5 10.5,11.5" fill="#5e5e5e"/></svg>
<div class="r" style="left:25px;top:133px;width:18.00px;height:12.00px;background:#5f5f5f;"></div>
<div class="r" style="left:25px;top:145px;width:18.00px;height:1.00px;background:#3f8f5a;"></div>
<div class="t" style="left:30.50px;top:135.00px;font-size:10.5px;line-height:10.5px;color:#e6e6e6;">A</div>
<div class="r" style="left:65.5px;top:134px;width:1.00px;height:12.00px;background:#3a3a3a;"></div>
<div class="t" style="left:51.00px;top:135.00px;font-size:10.5px;line-height:10.5px;color:#d4d4d4;">B</div>
<div class="r" style="left:194.5px;top:134px;width:1.00px;height:12.00px;background:#3a3a3a;"></div>
<div class="t" style="left:126.71px;top:135.00px;font-size:10.5px;line-height:10.5px;color:#d4d4d4;">C</div>
<div class="r" style="left:323.5px;top:134px;width:1.00px;height:12.00px;background:#3a3a3a;"></div>
<div class="t" style="left:255.71px;top:135.00px;font-size:10.5px;line-height:10.5px;color:#d4d4d4;">D</div>
<div class="r" style="left:451.5px;top:134px;width:1.00px;height:12.00px;background:#3a3a3a;"></div>
<div class="t" style="left:384.50px;top:135.00px;font-size:10.5px;line-height:10.5px;color:#d4d4d4;">E</div>
<div class="r" style="left:549.5px;top:134px;width:1.00px;height:12.00px;background:#3a3a3a;"></div>
<div class="t" style="left:497.79px;top:135.00px;font-size:10.5px;line-height:10.5px;color:#d4d4d4;">F</div>
<div class="r" style="left:647.5px;top:134px;width:1.00px;height:12.00px;background:#3a3a3a;"></div>
<div class="t" style="left:594.92px;top:135.00px;font-size:10.5px;line-height:10.5px;color:#d4d4d4;">G</div>
<div class="r" style="left:746.5px;top:134px;width:1.00px;height:12.00px;background:#3a3a3a;"></div>
<div class="t" style="left:693.71px;top:135.00px;font-size:10.5px;line-height:10.5px;color:#d4d4d4;">H</div>
<div class="r" style="left:846.0px;top:134px;width:1.00px;height:12.00px;background:#3a3a3a;"></div>
<div class="t" style="left:795.29px;top:135.00px;font-size:10.5px;line-height:10.5px;color:#d4d4d4;">I</div>
<div class="r" style="left:927.0px;top:134px;width:1.00px;height:12.00px;background:#3a3a3a;"></div>
<div class="t" style="left:884.38px;top:135.00px;font-size:10.5px;line-height:10.5px;color:#d4d4d4;">J</div>
<div class="r" style="left:1008.0px;top:134px;width:1.00px;height:12.00px;background:#3a3a3a;"></div>
<div class="t" style="left:964.50px;top:135.00px;font-size:10.5px;line-height:10.5px;color:#d4d4d4;">K</div>
<div class="r" style="left:1089.0px;top:134px;width:1.00px;height:12.00px;background:#3a3a3a;"></div>
<div class="t" style="left:1046.08px;top:135.00px;font-size:10.5px;line-height:10.5px;color:#d4d4d4;">L</div>
<div class="r" style="left:1170.0px;top:134px;width:1.00px;height:12.00px;background:#3a3a3a;"></div>
<div class="t" style="left:1125.63px;top:135.00px;font-size:10.5px;line-height:10.5px;color:#d4d4d4;">M</div>
<div class="r" style="left:1251.0px;top:134px;width:1.00px;height:12.00px;background:#3a3a3a;"></div>
<div class="t" style="left:1207.21px;top:135.00px;font-size:10.5px;line-height:10.5px;color:#d4d4d4;">N</div>
<div class="r" style="left:1332.0px;top:134px;width:1.00px;height:12.00px;background:#3a3a3a;"></div>
<div class="t" style="left:1287.92px;top:135.00px;font-size:10.5px;line-height:10.5px;color:#d4d4d4;">O</div>
<div class="r" style="left:1370px;top:134px;width:0.00px;height:12.00px;background:#3a3a3a;"></div>
<div class="r" style="left:42.5px;top:134px;width:1.00px;height:12.00px;background:#3a3a3a;"></div>
<div class="r" style="left:5px;top:146px;width:20.00px;height:654.00px;background:#0b0b0b;"></div>
<div class="r" style="left:5px;top:146px;width:20.00px;height:24.00px;background:#6a6a6a;"></div>
<div class="r" style="left:5px;top:169.2px;width:19.50px;height:1.00px;background:#a8a8a8;"></div>
<div class="r" style="left:24.5px;top:146px;width:1.00px;height:24.00px;background:#3f8f5a;"></div>
<div class="t" style="left:12.58px;top:158.00px;font-size:10.5px;line-height:10.5px;color:#ffffff;-webkit-text-stroke:0.2px currentColor;">1</div>
<div class="r" style="left:5px;top:189.5px;width:20.00px;height:1.00px;background:#2e2e2e;"></div>
<div class="t" style="left:12.58px;top:178.00px;font-size:10.5px;line-height:10.5px;color:#e0e0e0;-webkit-text-stroke:0.2px currentColor;">2</div>
<div class="r" style="left:5px;top:203.2px;width:20.00px;height:1.00px;background:#2e2e2e;"></div>
<div class="t" style="left:12.58px;top:192.00px;font-size:10.5px;line-height:10.5px;color:#e0e0e0;-webkit-text-stroke:0.2px currentColor;">3</div>
<div class="r" style="left:5px;top:217.7px;width:20.00px;height:1.00px;background:#2e2e2e;"></div>
<div class="t" style="left:12.58px;top:207.00px;font-size:10.5px;line-height:10.5px;color:#e0e0e0;-webkit-text-stroke:0.2px currentColor;">4</div>
<div class="r" style="left:5px;top:232.2px;width:20.00px;height:1.00px;background:#2e2e2e;"></div>
<div class="t" style="left:12.58px;top:221.00px;font-size:10.5px;line-height:10.5px;color:#e0e0e0;-webkit-text-stroke:0.2px currentColor;">6</div>
<div class="r" style="left:5px;top:246.1px;width:20.00px;height:1.00px;background:#2e2e2e;"></div>
<div class="t" style="left:12.58px;top:235.00px;font-size:10.5px;line-height:10.5px;color:#e0e0e0;-webkit-text-stroke:0.2px currentColor;">7</div>
<div class="r" style="left:5px;top:259.2px;width:20.00px;height:1.00px;background:#2e2e2e;"></div>
<div class="t" style="left:9.66px;top:248.00px;font-size:10.5px;line-height:10.5px;color:#e0e0e0;-webkit-text-stroke:0.2px currentColor;">13</div>
<div class="r" style="left:5px;top:282.8px;width:20.00px;height:1.00px;background:#2e2e2e;"></div>
<div class="t" style="left:9.66px;top:272.00px;font-size:10.5px;line-height:10.5px;color:#e0e0e0;-webkit-text-stroke:0.2px currentColor;">14</div>
<div class="r" style="left:5px;top:295.0px;width:20.00px;height:1.00px;background:#2e2e2e;"></div>
<div class="t" style="left:9.66px;top:284.00px;font-size:10.5px;line-height:10.5px;color:#e0e0e0;-webkit-text-stroke:0.2px currentColor;">15</div>
<div class="r" style="left:5px;top:312.2px;width:20.00px;height:1.00px;background:#2e2e2e;"></div>
<div class="t" style="left:9.66px;top:301.00px;font-size:10.5px;line-height:10.5px;color:#e0e0e0;-webkit-text-stroke:0.2px currentColor;">16</div>
<div class="r" style="left:5px;top:325.2px;width:20.00px;height:1.00px;background:#2e2e2e;"></div>
<div class="t" style="left:9.66px;top:314.00px;font-size:10.5px;line-height:10.5px;color:#e0e0e0;-webkit-text-stroke:0.2px currentColor;">17</div>
<div class="r" style="left:5px;top:338.6px;width:20.00px;height:1.00px;background:#2e2e2e;"></div>
<div class="t" style="left:9.66px;top:327.00px;font-size:10.5px;line-height:10.5px;color:#e0e0e0;-webkit-text-stroke:0.2px currentColor;">18</div>
<div class="r" style="left:5px;top:352.0px;width:20.00px;height:1.00px;background:#2e2e2e;"></div>
<div class="t" style="left:9.66px;top:341.00px;font-size:10.5px;line-height:10.5px;color:#e0e0e0;-webkit-text-stroke:0.2px currentColor;">19</div>
<div class="r" style="left:5px;top:365.40000000000003px;width:20.00px;height:1.00px;background:#2e2e2e;"></div>
<div class="t" style="left:9.66px;top:354.00px;font-size:10.5px;line-height:10.5px;color:#e0e0e0;-webkit-text-stroke:0.2px currentColor;">20</div>
<div class="r" style="left:5px;top:378.8px;width:20.00px;height:1.00px;background:#2e2e2e;"></div>
<div class="t" style="left:9.66px;top:368.00px;font-size:10.5px;line-height:10.5px;color:#e0e0e0;-webkit-text-stroke:0.2px currentColor;">21</div>
<div class="r" style="left:5px;top:392.20000000000005px;width:20.00px;height:1.00px;background:#2e2e2e;"></div>
<div class="t" style="left:9.66px;top:381.00px;font-size:10.5px;line-height:10.5px;color:#e0e0e0;-webkit-text-stroke:0.2px currentColor;">22</div>
<div class="r" style="left:5px;top:405.6px;width:20.00px;height:1.00px;background:#2e2e2e;"></div>
<div class="t" style="left:9.66px;top:395.00px;font-size:10.5px;line-height:10.5px;color:#e0e0e0;-webkit-text-stroke:0.2px currentColor;">23</div>
<div class="r" style="left:5px;top:419.0px;width:20.00px;height:1.00px;background:#2e2e2e;"></div>
<div class="t" style="left:9.66px;top:408.00px;font-size:10.5px;line-height:10.5px;color:#e0e0e0;-webkit-text-stroke:0.2px currentColor;">24</div>
<div class="r" style="left:5px;top:432.40000000000003px;width:20.00px;height:1.00px;background:#2e2e2e;"></div>
<div class="t" style="left:9.66px;top:421.00px;font-size:10.5px;line-height:10.5px;color:#e0e0e0;-webkit-text-stroke:0.2px currentColor;">25</div>
<div class="r" style="left:5px;top:445.8px;width:20.00px;height:1.00px;background:#2e2e2e;"></div>
<div class="t" style="left:9.66px;top:435.00px;font-size:10.5px;line-height:10.5px;color:#e0e0e0;-webkit-text-stroke:0.2px currentColor;">26</div>
<div class="r" style="left:5px;top:459.20000000000005px;width:20.00px;height:1.00px;background:#2e2e2e;"></div>
<div class="t" style="left:9.66px;top:448.00px;font-size:10.5px;line-height:10.5px;color:#e0e0e0;-webkit-text-stroke:0.2px currentColor;">27</div>
<div class="r" style="left:5px;top:472.6px;width:20.00px;height:1.00px;background:#2e2e2e;"></div>
<div class="t" style="left:9.66px;top:461.00px;font-size:10.5px;line-height:10.5px;color:#e0e0e0;-webkit-text-stroke:0.2px currentColor;">28</div>
<div class="r" style="left:5px;top:486.0px;width:20.00px;height:1.00px;background:#2e2e2e;"></div>
<div class="t" style="left:9.66px;top:475.00px;font-size:10.5px;line-height:10.5px;color:#e0e0e0;-webkit-text-stroke:0.2px currentColor;">29</div>
<div class="r" style="left:5px;top:499.4px;width:20.00px;height:1.00px;background:#2e2e2e;"></div>
<div class="t" style="left:9.66px;top:488.00px;font-size:10.5px;line-height:10.5px;color:#e0e0e0;-webkit-text-stroke:0.2px currentColor;">30</div>
<div class="r" style="left:5px;top:512.8px;width:20.00px;height:1.00px;background:#2e2e2e;"></div>
<div class="t" style="left:9.66px;top:502.00px;font-size:10.5px;line-height:10.5px;color:#e0e0e0;-webkit-text-stroke:0.2px currentColor;">31</div>
<div class="r" style="left:5px;top:526.2px;width:20.00px;height:1.00px;background:#2e2e2e;"></div>
<div class="t" style="left:9.66px;top:515.00px;font-size:10.5px;line-height:10.5px;color:#e0e0e0;-webkit-text-stroke:0.2px currentColor;">32</div>
<div class="r" style="left:5px;top:539.6px;width:20.00px;height:1.00px;background:#2e2e2e;"></div>
<div class="t" style="left:9.66px;top:529.00px;font-size:10.5px;line-height:10.5px;color:#e0e0e0;-webkit-text-stroke:0.2px currentColor;">33</div>
<div class="r" style="left:5px;top:553.0px;width:20.00px;height:1.00px;background:#2e2e2e;"></div>
<div class="t" style="left:9.66px;top:542.00px;font-size:10.5px;line-height:10.5px;color:#e0e0e0;-webkit-text-stroke:0.2px currentColor;">34</div>
<div class="r" style="left:5px;top:566.4px;width:20.00px;height:1.00px;background:#2e2e2e;"></div>
<div class="t" style="left:9.66px;top:555.00px;font-size:10.5px;line-height:10.5px;color:#e0e0e0;-webkit-text-stroke:0.2px currentColor;">35</div>
<div class="r" style="left:5px;top:579.8px;width:20.00px;height:1.00px;background:#2e2e2e;"></div>
<div class="t" style="left:9.66px;top:569.00px;font-size:10.5px;line-height:10.5px;color:#e0e0e0;-webkit-text-stroke:0.2px currentColor;">36</div>
<div class="r" style="left:5px;top:596.8px;width:20.00px;height:1.00px;background:#2e2e2e;"></div>
<div class="t" style="left:9.66px;top:586.00px;font-size:10.5px;line-height:10.5px;color:#e0e0e0;-webkit-text-stroke:0.2px currentColor;">37</div>
<div class="r" style="left:5px;top:609.9px;width:20.00px;height:1.00px;background:#2e2e2e;"></div>
<div class="t" style="left:9.66px;top:599.00px;font-size:10.5px;line-height:10.5px;color:#e0e0e0;-webkit-text-stroke:0.2px currentColor;">38</div>
<div class="r" style="left:5px;top:624.0px;width:20.00px;height:1.00px;background:#2e2e2e;"></div>
<div class="t" style="left:9.66px;top:613.00px;font-size:10.5px;line-height:10.5px;color:#e0e0e0;-webkit-text-stroke:0.2px currentColor;">39</div>
<div class="r" style="left:5px;top:643.8px;width:20.00px;height:1.00px;background:#2e2e2e;"></div>
<div class="t" style="left:9.66px;top:633.00px;font-size:10.5px;line-height:10.5px;color:#e0e0e0;-webkit-text-stroke:0.2px currentColor;">40</div>
<div class="r" style="left:5px;top:657.2px;width:20.00px;height:1.00px;background:#2e2e2e;"></div>
<div class="t" style="left:9.66px;top:646.00px;font-size:10.5px;line-height:10.5px;color:#e0e0e0;-webkit-text-stroke:0.2px currentColor;">41</div>
<div class="r" style="left:5px;top:670.7px;width:20.00px;height:1.00px;background:#2e2e2e;"></div>
<div class="t" style="left:9.66px;top:660.00px;font-size:10.5px;line-height:10.5px;color:#e0e0e0;-webkit-text-stroke:0.2px currentColor;">42</div>
<div class="r" style="left:5px;top:684.1px;width:20.00px;height:1.00px;background:#2e2e2e;"></div>
<div class="t" style="left:9.66px;top:673.00px;font-size:10.5px;line-height:10.5px;color:#e0e0e0;-webkit-text-stroke:0.2px currentColor;">43</div>
<div class="r" style="left:5px;top:698.0px;width:20.00px;height:1.00px;background:#2e2e2e;"></div>
<div class="t" style="left:9.66px;top:687.00px;font-size:10.5px;line-height:10.5px;color:#e0e0e0;-webkit-text-stroke:0.2px currentColor;">44</div>
<div class="r" style="left:5px;top:711.3px;width:20.00px;height:1.00px;background:#2e2e2e;"></div>
<div class="t" style="left:9.66px;top:700.00px;font-size:10.5px;line-height:10.5px;color:#e0e0e0;-webkit-text-stroke:0.2px currentColor;">45</div>
<div class="r" style="left:5px;top:731.3px;width:20.00px;height:1.00px;background:#2e2e2e;"></div>
<div class="t" style="left:9.66px;top:720.00px;font-size:10.5px;line-height:10.5px;color:#e0e0e0;-webkit-text-stroke:0.2px currentColor;">46</div>
<div class="r" style="left:5px;top:744.3px;width:20.00px;height:1.00px;background:#2e2e2e;"></div>
<div class="t" style="left:9.66px;top:733.00px;font-size:10.5px;line-height:10.5px;color:#e0e0e0;-webkit-text-stroke:0.2px currentColor;">47</div>
<div class="r" style="left:5px;top:757.8px;width:20.00px;height:1.00px;background:#2e2e2e;"></div>
<div class="t" style="left:9.66px;top:747.00px;font-size:10.5px;line-height:10.5px;color:#e0e0e0;-webkit-text-stroke:0.2px currentColor;">48</div>
<div class="r" style="left:5px;top:771.5px;width:20.00px;height:1.00px;background:#2e2e2e;"></div>
<div class="t" style="left:9.66px;top:760.00px;font-size:10.5px;line-height:10.5px;color:#e0e0e0;-webkit-text-stroke:0.2px currentColor;">49</div>
<div class="r" style="left:5px;top:791.7px;width:20.00px;height:1.00px;background:#2e2e2e;"></div>
<div class="t" style="left:9.66px;top:781.00px;font-size:10.5px;line-height:10.5px;color:#e0e0e0;-webkit-text-stroke:0.2px currentColor;">50</div>
<div class="r" style="left:25px;top:246.1px;width:1345.00px;height:1.00px;background:#c4c4c4;"></div>
<div class="r" style="left:846px;top:146px;width:1.00px;height:654.00px;background:#c4c4c4;"></div>
<div class="t" style="left:46.30px;top:150.00px;font-size:18.7px;line-height:18.7px;font-weight:700;color:#1c1c1c;transform:scaleX(1.0284);transform-origin:0 0;-webkit-text-stroke:0.25px currentColor;">Startup Costs (CAPEX)</div>
<div class="t" style="left:46.00px;top:173.00px;font-size:15.7px;line-height:15.7px;font-weight:700;color:#000;transform:scaleX(1.0614);transform-origin:0 0;-webkit-text-stroke:0.25px currentColor;">ABC Company Inc.</div>
<div class="t" style="left:45.00px;top:191.00px;font-size:10.9px;line-height:10.9px;font-weight:700;color:#1f6cf0;transform:scaleX(1.0064);transform-origin:0 0;text-decoration:underline;text-underline-offset:1px;-webkit-text-stroke:0.25px currentColor;">Go to Table of Contents</div>
<div class="t" style="left:44.80px;top:221.00px;font-size:11px;line-height:11px;font-weight:700;color:#000;transform:scaleX(1.0037);transform-origin:0 0;-webkit-text-stroke:0.25px currentColor;">Fiscal Year</div>
<div class="t" style="left:44.80px;top:235.00px;font-size:11px;line-height:11px;font-weight:700;color:#000;transform:scaleX(1.0186);transform-origin:0 0;-webkit-text-stroke:0.25px currentColor;">Month</div>
<div class="t" style="left:817.90px;top:221.00px;font-size:11px;line-height:11px;font-weight:700;color:#000;transform:scaleX(1.0625);transform-origin:0 0;-webkit-text-stroke:0.25px currentColor;">2025</div>
<div class="t" style="left:807.46px;top:235.00px;font-size:11px;line-height:11px;font-weight:700;color:#000;transform:scaleX(1.0100);transform-origin:0 0;-webkit-text-stroke:0.25px currentColor;">Dec-25</div>
<div class="t" style="left:898.90px;top:221.00px;font-size:11px;line-height:11px;font-weight:700;color:#000;transform:scaleX(1.0625);transform-origin:0 0;-webkit-text-stroke:0.25px currentColor;">2026</div>
<div class="t" style="left:889.70px;top:235.00px;font-size:11px;line-height:11px;font-weight:700;color:#000;transform:scaleX(1.0100);transform-origin:0 0;-webkit-text-stroke:0.25px currentColor;">Jan-26</div>
<div class="t" style="left:979.90px;top:221.00px;font-size:11px;line-height:11px;font-weight:700;color:#000;transform:scaleX(1.0625);transform-origin:0 0;-webkit-text-stroke:0.25px currentColor;">2026</div>
<div class="t" style="left:970.09px;top:235.00px;font-size:11px;line-height:11px;font-weight:700;color:#000;transform:scaleX(1.0100);transform-origin:0 0;-webkit-text-stroke:0.25px currentColor;">Feb-26</div>
<div class="t" style="left:1060.90px;top:221.00px;font-size:11px;line-height:11px;font-weight:700;color:#000;transform:scaleX(1.0625);transform-origin:0 0;-webkit-text-stroke:0.25px currentColor;">2026</div>
<div class="t" style="left:1051.08px;top:235.00px;font-size:11px;line-height:11px;font-weight:700;color:#000;transform:scaleX(1.0100);transform-origin:0 0;-webkit-text-stroke:0.25px currentColor;">Mar-26</div>
<div class="t" style="left:1141.90px;top:221.00px;font-size:11px;line-height:11px;font-weight:700;color:#000;transform:scaleX(1.0625);transform-origin:0 0;-webkit-text-stroke:0.25px currentColor;">2026</div>
<div class="t" style="left:1132.71px;top:235.00px;font-size:11px;line-height:11px;font-weight:700;color:#000;transform:scaleX(1.0100);transform-origin:0 0;-webkit-text-stroke:0.25px currentColor;">Apr-26</div>
<div class="t" style="left:1222.90px;top:221.00px;font-size:11px;line-height:11px;font-weight:700;color:#000;transform:scaleX(1.0625);transform-origin:0 0;-webkit-text-stroke:0.25px currentColor;">2026</div>
<div class="t" style="left:1211.23px;top:235.00px;font-size:11px;line-height:11px;font-weight:700;color:#000;transform:scaleX(1.0100);transform-origin:0 0;-webkit-text-stroke:0.25px currentColor;">May-26</div>
<div class="t" style="left:1303.90px;top:221.00px;font-size:11px;line-height:11px;font-weight:700;color:#000;transform:scaleX(1.0625);transform-origin:0 0;-webkit-text-stroke:0.25px currentColor;">2026</div>
<div class="t" style="left:1294.09px;top:235.00px;font-size:11px;line-height:11px;font-weight:700;color:#000;transform:scaleX(1.0100);transform-origin:0 0;-webkit-text-stroke:0.25px currentColor;">Jun-26</div>
<div class="t" style="left:45.70px;top:262.00px;font-size:19px;line-height:19px;font-weight:700;color:#1c1c1c;transform:scaleX(1.0192);transform-origin:0 0;-webkit-text-stroke:0.25px currentColor;">Startup Costs, $</div>
<div class="r" style="left:66.5px;top:295.6px;width:779.50px;height:15.40px;background:#6a70e4;"></div>
<div class="r" style="left:451.8px;top:295.6px;width:1.70px;height:15.40px;background:#ffffff;"></div>
<div class="r" style="left:549.8px;top:295.6px;width:1.70px;height:15.40px;background:#ffffff;"></div>
<div class="r" style="left:647.8px;top:295.6px;width:1.70px;height:15.40px;background:#ffffff;"></div>
<div class="r" style="left:746.8px;top:295.6px;width:1.70px;height:15.40px;background:#ffffff;"></div>
<div class="t" style="left:230.90px;top:298.00px;font-size:11px;line-height:11px;font-weight:700;color:#ffffff;transform:scaleX(1.0061);transform-origin:0 0;-webkit-text-stroke:0.25px currentColor;">Categories</div>
<div class="t" style="left:468.90px;top:298.00px;font-size:11px;line-height:11px;font-weight:700;color:#ffffff;transform:scaleX(1.0064);transform-origin:0 0;-webkit-text-stroke:0.25px currentColor;">Launch date</div>
<div class="t" style="left:576.00px;top:298.00px;font-size:11px;line-height:11px;font-weight:700;color:#ffffff;transform:scaleX(1.0118);transform-origin:0 0;-webkit-text-stroke:0.25px currentColor;">End date</div>
<div class="t" style="left:666.20px;top:298.00px;font-size:11px;line-height:11px;font-weight:700;color:#ffffff;transform:scaleX(1.0202);transform-origin:0 0;-webkit-text-stroke:0.25px currentColor;">Spending, $</div>
<div class="t" style="left:762.00px;top:298.00px;font-size:11px;line-height:11px;font-weight:700;color:#ffffff;transform:scaleX(1.0118);transform-origin:0 0;-webkit-text-stroke:0.25px currentColor;">Amortizable?</div>
<div class="r" style="left:66.8px;top:312.3px;width:779.20px;height:268.30px;background:#fff06a;"></div>
<div class="r" style="left:66.8px;top:325.2px;width:779.20px;height:1.00px;background:#fff8b4;"></div>
<div class="r" style="left:66.8px;top:338.6px;width:779.20px;height:1.00px;background:#fff8b4;"></div>
<div class="r" style="left:66.8px;top:352.0px;width:779.20px;height:1.00px;background:#fff8b4;"></div>
<div class="r" style="left:66.8px;top:365.40000000000003px;width:779.20px;height:1.00px;background:#fff8b4;"></div>
<div class="r" style="left:66.8px;top:378.8px;width:779.20px;height:1.00px;background:#fff8b4;"></div>
<div class="r" style="left:66.8px;top:392.20000000000005px;width:779.20px;height:1.00px;background:#fff8b4;"></div>
<div class="r" style="left:66.8px;top:405.6px;width:779.20px;height:1.00px;background:#fff8b4;"></div>
<div class="r" style="left:66.8px;top:419.0px;width:779.20px;height:1.00px;background:#fff8b4;"></div>
<div class="r" style="left:66.8px;top:432.40000000000003px;width:779.20px;height:1.00px;background:#fff8b4;"></div>
<div class="r" style="left:66.8px;top:445.8px;width:779.20px;height:1.00px;background:#fff8b4;"></div>
<div class="r" style="left:66.8px;top:459.20000000000005px;width:779.20px;height:1.00px;background:#fff8b4;"></div>
<div class="r" style="left:66.8px;top:472.6px;width:779.20px;height:1.00px;background:#fff8b4;"></div>
<div class="r" style="left:66.8px;top:486.0px;width:779.20px;height:1.00px;background:#fff8b4;"></div>
<div class="r" style="left:66.8px;top:499.4px;width:779.20px;height:1.00px;background:#fff8b4;"></div>
<div class="r" style="left:66.8px;top:512.8px;width:779.20px;height:1.00px;background:#fff8b4;"></div>
<div class="r" style="left:66.8px;top:526.2px;width:779.20px;height:1.00px;background:#fff8b4;"></div>
<div class="r" style="left:66.8px;top:539.6px;width:779.20px;height:1.00px;background:#fff8b4;"></div>
<div class="r" style="left:66.8px;top:553.0px;width:779.20px;height:1.00px;background:#fff8b4;"></div>
<div class="r" style="left:66.8px;top:566.4px;width:779.20px;height:1.00px;background:#fff8b4;"></div>
<div class="r" style="left:451.8px;top:312.3px;width:1.70px;height:268.30px;background:#ffffff;"></div>
<div class="r" style="left:549.8px;top:312.3px;width:1.70px;height:268.30px;background:#ffffff;"></div>
<div class="r" style="left:647.8px;top:312.3px;width:1.70px;height:268.30px;background:#ffffff;"></div>
<div class="r" style="left:746.8px;top:312.3px;width:1.70px;height:268.30px;background:#ffffff;"></div>
<div class="t" style="left:67.90px;top:314.00px;font-size:10.9px;line-height:10.9px;color:#1e1e1e;transform:scaleX(0.9774);transform-origin:0 0;-webkit-text-stroke:0.2px currentColor;">Initial Website Platform Build</div>
<div class="t" style="left:485.14px;top:314.00px;font-size:10.9px;line-height:10.9px;color:#1e1e1e;transform:scaleX(0.9700);transform-origin:0 0;-webkit-text-stroke:0.2px currentColor;">Jan-26</div>
<div class="t" style="left:582.55px;top:314.00px;font-size:10.9px;line-height:10.9px;color:#1e1e1e;transform:scaleX(0.9700);transform-origin:0 0;-webkit-text-stroke:0.2px currentColor;">Mar-26</div>
<div class="t" style="left:709.16px;top:314.00px;font-size:10.9px;line-height:10.9px;color:#1e1e1e;transform:scaleX(0.9700);transform-origin:0 0;-webkit-text-stroke:0.2px currentColor;">15,000</div>
<div class="t" style="left:788.68px;top:314.00px;font-size:10.9px;line-height:10.9px;color:#1e1e1e;transform:scaleX(0.9700);transform-origin:0 0;-webkit-text-stroke:0.2px currentColor;">Yes</div>
<div class="t" style="left:895.84px;top:314.00px;font-size:10.9px;line-height:10.9px;color:#1e1e1e;transform:scaleX(0.9700);transform-origin:0 0;-webkit-text-stroke:0.2px currentColor;">5,000</div>
<div class="t" style="left:976.84px;top:314.00px;font-size:10.9px;line-height:10.9px;color:#1e1e1e;transform:scaleX(0.9700);transform-origin:0 0;-webkit-text-stroke:0.2px currentColor;">5,000</div>
<div class="t" style="left:1057.84px;top:314.00px;font-size:10.9px;line-height:10.9px;color:#1e1e1e;transform:scaleX(0.9700);transform-origin:0 0;-webkit-text-stroke:0.2px currentColor;">5,000</div>
<div class="t" style="left:1149.84px;top:314.00px;font-size:10.9px;line-height:10.9px;color:#1e1e1e;transform:scaleX(0.9700);transform-origin:0 0;-webkit-text-stroke:0.2px currentColor;">-</div>
<div class="t" style="left:1230.84px;top:314.00px;font-size:10.9px;line-height:10.9px;color:#1e1e1e;transform:scaleX(0.9700);transform-origin:0 0;-webkit-text-stroke:0.2px currentColor;">-</div>
<div class="t" style="left:1311.84px;top:314.00px;font-size:10.9px;line-height:10.9px;color:#1e1e1e;transform:scaleX(0.9700);transform-origin:0 0;-webkit-text-stroke:0.2px currentColor;">-</div>
<div class="t" style="left:67.90px;top:327.00px;font-size:10.9px;line-height:10.9px;color:#1e1e1e;transform:scaleX(0.9570);transform-origin:0 0;-webkit-text-stroke:0.2px currentColor;">Office Equipment &amp; Furnishings</div>
<div class="t" style="left:485.14px;top:327.00px;font-size:10.9px;line-height:10.9px;color:#1e1e1e;transform:scaleX(0.9700);transform-origin:0 0;-webkit-text-stroke:0.2px currentColor;">Jan-26</div>
<div class="t" style="left:582.55px;top:327.00px;font-size:10.9px;line-height:10.9px;color:#1e1e1e;transform:scaleX(0.9700);transform-origin:0 0;-webkit-text-stroke:0.2px currentColor;">Feb-26</div>
<div class="t" style="left:715.04px;top:327.00px;font-size:10.9px;line-height:10.9px;color:#1e1e1e;transform:scaleX(0.9700);transform-origin:0 0;-webkit-text-stroke:0.2px currentColor;">8,000</div>
<div class="t" style="left:788.68px;top:327.00px;font-size:10.9px;line-height:10.9px;color:#1e1e1e;transform:scaleX(0.9700);transform-origin:0 0;-webkit-text-stroke:0.2px currentColor;">Yes</div>
<div class="t" style="left:895.84px;top:327.00px;font-size:10.9px;line-height:10.9px;color:#1e1e1e;transform:scaleX(0.9700);transform-origin:0 0;-webkit-text-stroke:0.2px currentColor;">4,000</div>
<div class="t" style="left:976.84px;top:327.00px;font-size:10.9px;line-height:10.9px;color:#1e1e1e;transform:scaleX(0.9700);transform-origin:0 0;-webkit-text-stroke:0.2px currentColor;">4,000</div>
<div class="t" style="left:1068.84px;top:327.00px;font-size:10.9px;line-height:10.9px;color:#1e1e1e;transform:scaleX(0.9700);transform-origin:0 0;-webkit-text-stroke:0.2px currentColor;">-</div>
<div class="t" style="left:1149.84px;top:327.00px;font-size:10.9px;line-height:10.9px;color:#1e1e1e;transform:scaleX(0.9700);transform-origin:0 0;-webkit-text-stroke:0.2px currentColor;">-</div>
<div class="t" style="left:1230.84px;top:327.00px;font-size:10.9px;line-height:10.9px;color:#1e1e1e;transform:scaleX(0.9700);transform-origin:0 0;-webkit-text-stroke:0.2px currentColor;">-</div>
<div class="t" style="left:1311.84px;top:327.00px;font-size:10.9px;line-height:10.9px;color:#1e1e1e;transform:scaleX(0.9700);transform-origin:0 0;-webkit-text-stroke:0.2px currentColor;">-</div>
<div class="t" style="left:67.90px;top:341.00px;font-size:10.9px;line-height:10.9px;color:#1e1e1e;transform:scaleX(0.9681);transform-origin:0 0;-webkit-text-stroke:0.2px currentColor;">Initial Inventory Stock Purchase</div>
<div class="t" style="left:485.14px;top:341.00px;font-size:10.9px;line-height:10.9px;color:#1e1e1e;transform:scaleX(0.9700);transform-origin:0 0;-webkit-text-stroke:0.2px currentColor;">Jan-26</div>
<div class="t" style="left:583.14px;top:341.00px;font-size:10.9px;line-height:10.9px;color:#1e1e1e;transform:scaleX(0.9700);transform-origin:0 0;-webkit-text-stroke:0.2px currentColor;">Jan-26</div>
<div class="t" style="left:709.16px;top:341.00px;font-size:10.9px;line-height:10.9px;color:#1e1e1e;transform:scaleX(0.9700);transform-origin:0 0;-webkit-text-stroke:0.2px currentColor;">20,000</div>
<div class="t" style="left:788.68px;top:341.00px;font-size:10.9px;line-height:10.9px;color:#1e1e1e;transform:scaleX(0.9700);transform-origin:0 0;-webkit-text-stroke:0.2px currentColor;">Yes</div>
<div class="t" style="left:889.96px;top:341.00px;font-size:10.9px;line-height:10.9px;color:#1e1e1e;transform:scaleX(0.9700);transform-origin:0 0;-webkit-text-stroke:0.2px currentColor;">20,000</div>
<div class="t" style="left:987.84px;top:341.00px;font-size:10.9px;line-height:10.9px;color:#1e1e1e;transform:scaleX(0.9700);transform-origin:0 0;-webkit-text-stroke:0.2px currentColor;">-</div>
<div class="t" style="left:1068.84px;top:341.00px;font-size:10.9px;line-height:10.9px;color:#1e1e1e;transform:scaleX(0.9700);transform-origin:0 0;-webkit-text-stroke:0.2px currentColor;">-</div>
<div class="t" style="left:1149.84px;top:341.00px;font-size:10.9px;line-height:10.9px;color:#1e1e1e;transform:scaleX(0.9700);transform-origin:0 0;-webkit-text-stroke:0.2px currentColor;">-</div>
<div class="t" style="left:1230.84px;top:341.00px;font-size:10.9px;line-height:10.9px;color:#1e1e1e;transform:scaleX(0.9700);transform-origin:0 0;-webkit-text-stroke:0.2px currentColor;">-</div>
<div class="t" style="left:1311.84px;top:341.00px;font-size:10.9px;line-height:10.9px;color:#1e1e1e;transform:scaleX(0.9700);transform-origin:0 0;-webkit-text-stroke:0.2px currentColor;">-</div>
<div class="t" style="left:67.90px;top:354.00px;font-size:10.9px;line-height:10.9px;color:#1e1e1e;transform:scaleX(0.9513);transform-origin:0 0;-webkit-text-stroke:0.2px currentColor;">Branding &amp; Design Package</div>
<div class="t" style="left:485.14px;top:354.00px;font-size:10.9px;line-height:10.9px;color:#1e1e1e;transform:scaleX(0.9700);transform-origin:0 0;-webkit-text-stroke:0.2px currentColor;">Jan-26</div>
<div class="t" style="left:582.55px;top:354.00px;font-size:10.9px;line-height:10.9px;color:#1e1e1e;transform:scaleX(0.9700);transform-origin:0 0;-webkit-text-stroke:0.2px currentColor;">Mar-26</div>
<div class="t" style="left:715.04px;top:354.00px;font-size:10.9px;line-height:10.9px;color:#1e1e1e;transform:scaleX(0.9700);transform-origin:0 0;-webkit-text-stroke:0.2px currentColor;">7,000</div>
<div class="t" style="left:788.68px;top:354.00px;font-size:10.9px;line-height:10.9px;color:#1e1e1e;transform:scaleX(0.9700);transform-origin:0 0;-webkit-text-stroke:0.2px currentColor;">Yes</div>
<div class="t" style="left:895.84px;top:354.00px;font-size:10.9px;line-height:10.9px;color:#1e1e1e;transform:scaleX(0.9700);transform-origin:0 0;-webkit-text-stroke:0.2px currentColor;">2,333</div>
<div class="t" style="left:976.84px;top:354.00px;font-size:10.9px;line-height:10.9px;color:#1e1e1e;transform:scaleX(0.9700);transform-origin:0 0;-webkit-text-stroke:0.2px currentColor;">2,333</div>
<div class="t" style="left:1057.84px;top:354.00px;font-size:10.9px;line-height:10.9px;color:#1e1e1e;transform:scaleX(0.9700);transform-origin:0 0;-webkit-text-stroke:0.2px currentColor;">2,333</div>
<div class="t" style="left:1149.84px;top:354.00px;font-size:10.9px;line-height:10.9px;color:#1e1e1e;transform:scaleX(0.9700);transform-origin:0 0;-webkit-text-stroke:0.2px currentColor;">-</div>
<div class="t" style="left:1230.84px;top:354.00px;font-size:10.9px;line-height:10.9px;color:#1e1e1e;transform:scaleX(0.9700);transform-origin:0 0;-webkit-text-stroke:0.2px currentColor;">-</div>
<div class="t" style="left:1311.84px;top:354.00px;font-size:10.9px;line-height:10.9px;color:#1e1e1e;transform:scaleX(0.9700);transform-origin:0 0;-webkit-text-stroke:0.2px currentColor;">-</div>
<div class="t" style="left:67.90px;top:367.00px;font-size:10.9px;line-height:10.9px;color:#1e1e1e;transform:scaleX(0.9573);transform-origin:0 0;-webkit-text-stroke:0.2px currentColor;">Warehouse Setup &amp; Racking</div>
<div class="t" style="left:485.43px;top:367.00px;font-size:10.9px;line-height:10.9px;color:#1e1e1e;transform:scaleX(0.9700);transform-origin:0 0;-webkit-text-stroke:0.2px currentColor;">Apr-26</div>
<div class="t" style="left:583.14px;top:367.00px;font-size:10.9px;line-height:10.9px;color:#1e1e1e;transform:scaleX(0.9700);transform-origin:0 0;-webkit-text-stroke:0.2px currentColor;">Jun-26</div>
<div class="t" style="left:709.16px;top:367.00px;font-size:10.9px;line-height:10.9px;color:#1e1e1e;transform:scaleX(0.9700);transform-origin:0 0;-webkit-text-stroke:0.2px currentColor;">10,000</div>
<div class="t" style="left:788.68px;top:367.00px;font-size:10.9px;line-height:10.9px;color:#1e1e1e;transform:scaleX(0.9700);transform-origin:0 0;-webkit-text-stroke:0.2px currentColor;">Yes</div>
<div class="t" style="left:906.84px;top:367.00px;font-size:10.9px;line-height:10.9px;color:#1e1e1e;transform:scaleX(0.9700);transform-origin:0 0;-webkit-text-stroke:0.2px currentColor;">-</div>
<div class="t" style="left:987.84px;top:367.00px;font-size:10.9px;line-height:10.9px;color:#1e1e1e;transform:scaleX(0.9700);transform-origin:0 0;-webkit-text-stroke:0.2px currentColor;">-</div>
<div class="t" style="left:1068.84px;top:367.00px;font-size:10.9px;line-height:10.9px;color:#1e1e1e;transform:scaleX(0.9700);transform-origin:0 0;-webkit-text-stroke:0.2px currentColor;">-</div>
<div class="t" style="left:1138.84px;top:367.00px;font-size:10.9px;line-height:10.9px;color:#1e1e1e;transform:scaleX(0.9700);transform-origin:0 0;-webkit-text-stroke:0.2px currentColor;">3,333</div>
<div class="t" style="left:1219.84px;top:367.00px;font-size:10.9px;line-height:10.9px;color:#1e1e1e;transform:scaleX(0.9700);transform-origin:0 0;-webkit-text-stroke:0.2px currentColor;">3,333</div>
<div class="t" style="left:1300.84px;top:367.00px;font-size:10.9px;line-height:10.9px;color:#1e1e1e;transform:scaleX(0.9700);transform-origin:0 0;-webkit-text-stroke:0.2px currentColor;">3,333</div>
<div class="t" style="left:67.90px;top:381.00px;font-size:10.9px;line-height:10.9px;color:#1e1e1e;transform:scaleX(0.9603);transform-origin:0 0;-webkit-text-stroke:0.2px currentColor;">Photography &amp; Video Equipment</div>
<div class="t" style="left:484.55px;top:381.00px;font-size:10.9px;line-height:10.9px;color:#1e1e1e;transform:scaleX(0.9700);transform-origin:0 0;-webkit-text-stroke:0.2px currentColor;">Feb-26</div>
<div class="t" style="left:582.55px;top:381.00px;font-size:10.9px;line-height:10.9px;color:#1e1e1e;transform:scaleX(0.9700);transform-origin:0 0;-webkit-text-stroke:0.2px currentColor;">Mar-26</div>
<div class="t" style="left:715.04px;top:381.00px;font-size:10.9px;line-height:10.9px;color:#1e1e1e;transform:scaleX(0.9700);transform-origin:0 0;-webkit-text-stroke:0.2px currentColor;">5,000</div>
<div class="t" style="left:788.68px;top:381.00px;font-size:10.9px;line-height:10.9px;color:#1e1e1e;transform:scaleX(0.9700);transform-origin:0 0;-webkit-text-stroke:0.2px currentColor;">Yes</div>
<div class="t" style="left:906.84px;top:381.00px;font-size:10.9px;line-height:10.9px;color:#1e1e1e;transform:scaleX(0.9700);transform-origin:0 0;-webkit-text-stroke:0.2px currentColor;">-</div>
<div class="t" style="left:976.84px;top:381.00px;font-size:10.9px;line-height:10.9px;color:#1e1e1e;transform:scaleX(0.9700);transform-origin:0 0;-webkit-text-stroke:0.2px currentColor;">2,500</div>
<div class="t" style="left:1057.84px;top:381.00px;font-size:10.9px;line-height:10.9px;color:#1e1e1e;transform:scaleX(0.9700);transform-origin:0 0;-webkit-text-stroke:0.2px currentColor;">2,500</div>
<div class="t" style="left:1149.84px;top:381.00px;font-size:10.9px;line-height:10.9px;color:#1e1e1e;transform:scaleX(0.9700);transform-origin:0 0;-webkit-text-stroke:0.2px currentColor;">-</div>
<div class="t" style="left:1230.84px;top:381.00px;font-size:10.9px;line-height:10.9px;color:#1e1e1e;transform:scaleX(0.9700);transform-origin:0 0;-webkit-text-stroke:0.2px currentColor;">-</div>
<div class="t" style="left:1311.84px;top:381.00px;font-size:10.9px;line-height:10.9px;color:#1e1e1e;transform:scaleX(0.9700);transform-origin:0 0;-webkit-text-stroke:0.2px currentColor;">-</div>
<div class="t" style="left:67.90px;top:394.00px;font-size:10.9px;line-height:10.9px;color:#1e1e1e;transform:scaleX(0.9507);transform-origin:0 0;-webkit-text-stroke:0.2px currentColor;">CRM &amp; Analytics Software Setup</div>
<div class="t" style="left:485.14px;top:394.00px;font-size:10.9px;line-height:10.9px;color:#1e1e1e;transform:scaleX(0.9700);transform-origin:0 0;-webkit-text-stroke:0.2px currentColor;">Jan-26</div>
<div class="t" style="left:582.55px;top:394.00px;font-size:10.9px;line-height:10.9px;color:#1e1e1e;transform:scaleX(0.9700);transform-origin:0 0;-webkit-text-stroke:0.2px currentColor;">Mar-26</div>
<div class="t" style="left:715.04px;top:394.00px;font-size:10.9px;line-height:10.9px;color:#1e1e1e;transform:scaleX(0.9700);transform-origin:0 0;-webkit-text-stroke:0.2px currentColor;">4,000</div>
<div class="t" style="left:788.68px;top:394.00px;font-size:10.9px;line-height:10.9px;color:#1e1e1e;transform:scaleX(0.9700);transform-origin:0 0;-webkit-text-stroke:0.2px currentColor;">Yes</div>
<div class="t" style="left:895.84px;top:394.00px;font-size:10.9px;line-height:10.9px;color:#1e1e1e;transform:scaleX(0.9700);transform-origin:0 0;-webkit-text-stroke:0.2px currentColor;">1,333</div>
<div class="t" style="left:976.84px;top:394.00px;font-size:10.9px;line-height:10.9px;color:#1e1e1e;transform:scaleX(0.9700);transform-origin:0 0;-webkit-text-stroke:0.2px currentColor;">1,333</div>
<div class="t" style="left:1057.84px;top:394.00px;font-size:10.9px;line-height:10.9px;color:#1e1e1e;transform:scaleX(0.9700);transform-origin:0 0;-webkit-text-stroke:0.2px currentColor;">1,333</div>
<div class="t" style="left:1149.84px;top:394.00px;font-size:10.9px;line-height:10.9px;color:#1e1e1e;transform:scaleX(0.9700);transform-origin:0 0;-webkit-text-stroke:0.2px currentColor;">-</div>
<div class="t" style="left:1230.84px;top:394.00px;font-size:10.9px;line-height:10.9px;color:#1e1e1e;transform:scaleX(0.9700);transform-origin:0 0;-webkit-text-stroke:0.2px currentColor;">-</div>
<div class="t" style="left:1311.84px;top:394.00px;font-size:10.9px;line-height:10.9px;color:#1e1e1e;transform:scaleX(0.9700);transform-origin:0 0;-webkit-text-stroke:0.2px currentColor;">-</div>
<div class="t" style="left:67.90px;top:408.00px;font-size:10.9px;line-height:10.9px;color:#1e1e1e;transform:scaleX(0.9700);transform-origin:0 0;-webkit-text-stroke:0.2px currentColor;">-</div>
<div class="t" style="left:788.68px;top:408.00px;font-size:10.9px;line-height:10.9px;color:#1e1e1e;transform:scaleX(0.9700);transform-origin:0 0;-webkit-text-stroke:0.2px currentColor;">Yes</div>
<div class="t" style="left:906.84px;top:408.00px;font-size:10.9px;line-height:10.9px;color:#1e1e1e;transform:scaleX(0.9700);transform-origin:0 0;-webkit-text-stroke:0.2px currentColor;">-</div>
<div class="t" style="left:987.84px;top:408.00px;font-size:10.9px;line-height:10.9px;color:#1e1e1e;transform:scaleX(0.9700);transform-origin:0 0;-webkit-text-stroke:0.2px currentColor;">-</div>
<div class="t" style="left:1068.84px;top:408.00px;font-size:10.9px;line-height:10.9px;color:#1e1e1e;transform:scaleX(0.9700);transform-origin:0 0;-webkit-text-stroke:0.2px currentColor;">-</div>
<div class="t" style="left:1149.84px;top:408.00px;font-size:10.9px;line-height:10.9px;color:#1e1e1e;transform:scaleX(0.9700);transform-origin:0 0;-webkit-text-stroke:0.2px currentColor;">-</div>
<div class="t" style="left:1230.84px;top:408.00px;font-size:10.9px;line-height:10.9px;color:#1e1e1e;transform:scaleX(0.9700);transform-origin:0 0;-webkit-text-stroke:0.2px currentColor;">-</div>
<div class="t" style="left:1311.84px;top:408.00px;font-size:10.9px;line-height:10.9px;color:#1e1e1e;transform:scaleX(0.9700);transform-origin:0 0;-webkit-text-stroke:0.2px currentColor;">-</div>
<div class="t" style="left:67.90px;top:421.00px;font-size:10.9px;line-height:10.9px;color:#1e1e1e;transform:scaleX(0.9700);transform-origin:0 0;-webkit-text-stroke:0.2px currentColor;">-</div>
<div class="t" style="left:788.68px;top:421.00px;font-size:10.9px;line-height:10.9px;color:#1e1e1e;transform:scaleX(0.9700);transform-origin:0 0;-webkit-text-stroke:0.2px currentColor;">Yes</div>
<div class="t" style="left:906.84px;top:421.00px;font-size:10.9px;line-height:10.9px;color:#1e1e1e;transform:scaleX(0.9700);transform-origin:0 0;-webkit-text-stroke:0.2px currentColor;">-</div>
<div class="t" style="left:987.84px;top:421.00px;font-size:10.9px;line-height:10.9px;color:#1e1e1e;transform:scaleX(0.9700);transform-origin:0 0;-webkit-text-stroke:0.2px currentColor;">-</div>
<div class="t" style="left:1068.84px;top:421.00px;font-size:10.9px;line-height:10.9px;color:#1e1e1e;transform:scaleX(0.9700);transform-origin:0 0;-webkit-text-stroke:0.2px currentColor;">-</div>
<div class="t" style="left:1149.84px;top:421.00px;font-size:10.9px;line-height:10.9px;color:#1e1e1e;transform:scaleX(0.9700);transform-origin:0 0;-webkit-text-stroke:0.2px currentColor;">-</div>
<div class="t" style="left:1230.84px;top:421.00px;font-size:10.9px;line-height:10.9px;color:#1e1e1e;transform:scaleX(0.9700);transform-origin:0 0;-webkit-text-stroke:0.2px currentColor;">-</div>
<div class="t" style="left:1311.84px;top:421.00px;font-size:10.9px;line-height:10.9px;color:#1e1e1e;transform:scaleX(0.9700);transform-origin:0 0;-webkit-text-stroke:0.2px currentColor;">-</div>
<div class="t" style="left:67.90px;top:435.00px;font-size:10.9px;line-height:10.9px;color:#1e1e1e;transform:scaleX(0.9700);transform-origin:0 0;-webkit-text-stroke:0.2px currentColor;">-</div>
<div class="t" style="left:788.68px;top:435.00px;font-size:10.9px;line-height:10.9px;color:#1e1e1e;transform:scaleX(0.9700);transform-origin:0 0;-webkit-text-stroke:0.2px currentColor;">Yes</div>
<div class="t" style="left:906.84px;top:435.00px;font-size:10.9px;line-height:10.9px;color:#1e1e1e;transform:scaleX(0.9700);transform-origin:0 0;-webkit-text-stroke:0.2px currentColor;">-</div>
<div class="t" style="left:987.84px;top:435.00px;font-size:10.9px;line-height:10.9px;color:#1e1e1e;transform:scaleX(0.9700);transform-origin:0 0;-webkit-text-stroke:0.2px currentColor;">-</div>
<div class="t" style="left:1068.84px;top:435.00px;font-size:10.9px;line-height:10.9px;color:#1e1e1e;transform:scaleX(0.9700);transform-origin:0 0;-webkit-text-stroke:0.2px currentColor;">-</div>
<div class="t" style="left:1149.84px;top:435.00px;font-size:10.9px;line-height:10.9px;color:#1e1e1e;transform:scaleX(0.9700);transform-origin:0 0;-webkit-text-stroke:0.2px currentColor;">-</div>
<div class="t" style="left:1230.84px;top:435.00px;font-size:10.9px;line-height:10.9px;color:#1e1e1e;transform:scaleX(0.9700);transform-origin:0 0;-webkit-text-stroke:0.2px currentColor;">-</div>
<div class="t" style="left:1311.84px;top:435.00px;font-size:10.9px;line-height:10.9px;color:#1e1e1e;transform:scaleX(0.9700);transform-origin:0 0;-webkit-text-stroke:0.2px currentColor;">-</div>
<div class="t" style="left:67.90px;top:448.00px;font-size:10.9px;line-height:10.9px;color:#1e1e1e;transform:scaleX(0.9700);transform-origin:0 0;-webkit-text-stroke:0.2px currentColor;">-</div>
<div class="t" style="left:788.68px;top:448.00px;font-size:10.9px;line-height:10.9px;color:#1e1e1e;transform:scaleX(0.9700);transform-origin:0 0;-webkit-text-stroke:0.2px currentColor;">Yes</div>
<div class="t" style="left:906.84px;top:448.00px;font-size:10.9px;line-height:10.9px;color:#1e1e1e;transform:scaleX(0.9700);transform-origin:0 0;-webkit-text-stroke:0.2px currentColor;">-</div>
<div class="t" style="left:987.84px;top:448.00px;font-size:10.9px;line-height:10.9px;color:#1e1e1e;transform:scaleX(0.9700);transform-origin:0 0;-webkit-text-stroke:0.2px currentColor;">-</div>
<div class="t" style="left:1068.84px;top:448.00px;font-size:10.9px;line-height:10.9px;color:#1e1e1e;transform:scaleX(0.9700);transform-origin:0 0;-webkit-text-stroke:0.2px currentColor;">-</div>
<div class="t" style="left:1149.84px;top:448.00px;font-size:10.9px;line-height:10.9px;color:#1e1e1e;transform:scaleX(0.9700);transform-origin:0 0;-webkit-text-stroke:0.2px currentColor;">-</div>
<div class="t" style="left:1230.84px;top:448.00px;font-size:10.9px;line-height:10.9px;color:#1e1e1e;transform:scaleX(0.9700);transform-origin:0 0;-webkit-text-stroke:0.2px currentColor;">-</div>
<div class="t" style="left:1311.84px;top:448.00px;font-size:10.9px;line-height:10.9px;color:#1e1e1e;transform:scaleX(0.9700);transform-origin:0 0;-webkit-text-stroke:0.2px currentColor;">-</div>
<div class="t" style="left:67.90px;top:461.00px;font-size:10.9px;line-height:10.9px;color:#1e1e1e;transform:scaleX(0.9700);transform-origin:0 0;-webkit-text-stroke:0.2px currentColor;">-</div>
<div class="t" style="left:788.68px;top:461.00px;font-size:10.9px;line-height:10.9px;color:#1e1e1e;transform:scaleX(0.9700);transform-origin:0 0;-webkit-text-stroke:0.2px currentColor;">Yes</div>
<div class="t" style="left:906.84px;top:461.00px;font-size:10.9px;line-height:10.9px;color:#1e1e1e;transform:scaleX(0.9700);transform-origin:0 0;-webkit-text-stroke:0.2px currentColor;">-</div>
<div class="t" style="left:987.84px;top:461.00px;font-size:10.9px;line-height:10.9px;color:#1e1e1e;transform:scaleX(0.9700);transform-origin:0 0;-webkit-text-stroke:0.2px currentColor;">-</div>
<div class="t" style="left:1068.84px;top:461.00px;font-size:10.9px;line-height:10.9px;color:#1e1e1e;transform:scaleX(0.9700);transform-origin:0 0;-webkit-text-stroke:0.2px currentColor;">-</div>
<div class="t" style="left:1149.84px;top:461.00px;font-size:10.9px;line-height:10.9px;color:#1e1e1e;transform:scaleX(0.9700);transform-origin:0 0;-webkit-text-stroke:0.2px currentColor;">-</div>
<div class="t" style="left:1230.84px;top:461.00px;font-size:10.9px;line-height:10.9px;color:#1e1e1e;transform:scaleX(0.9700);transform-origin:0 0;-webkit-text-stroke:0.2px currentColor;">-</div>
<div class="t" style="left:1311.84px;top:461.00px;font-size:10.9px;line-height:10.9px;color:#1e1e1e;transform:scaleX(0.9700);transform-origin:0 0;-webkit-text-stroke:0.2px currentColor;">-</div>
<div class="t" style="left:67.90px;top:475.00px;font-size:10.9px;line-height:10.9px;color:#1e1e1e;transform:scaleX(0.9700);transform-origin:0 0;-webkit-text-stroke:0.2px currentColor;">-</div>
<div class="t" style="left:788.68px;top:475.00px;font-size:10.9px;line-height:10.9px;color:#1e1e1e;transform:scaleX(0.9700);transform-origin:0 0;-webkit-text-stroke:0.2px currentColor;">Yes</div>
<div class="t" style="left:906.84px;top:475.00px;font-size:10.9px;line-height:10.9px;color:#1e1e1e;transform:scaleX(0.9700);transform-origin:0 0;-webkit-text-stroke:0.2px currentColor;">-</div>
<div class="t" style="left:987.84px;top:475.00px;font-size:10.9px;line-height:10.9px;color:#1e1e1e;transform:scaleX(0.9700);transform-origin:0 0;-webkit-text-stroke:0.2px currentColor;">-</div>
<div class="t" style="left:1068.84px;top:475.00px;font-size:10.9px;line-height:10.9px;color:#1e1e1e;transform:scaleX(0.9700);transform-origin:0 0;-webkit-text-stroke:0.2px currentColor;">-</div>
<div class="t" style="left:1149.84px;top:475.00px;font-size:10.9px;line-height:10.9px;color:#1e1e1e;transform:scaleX(0.9700);transform-origin:0 0;-webkit-text-stroke:0.2px currentColor;">-</div>
<div class="t" style="left:1230.84px;top:475.00px;font-size:10.9px;line-height:10.9px;color:#1e1e1e;transform:scaleX(0.9700);transform-origin:0 0;-webkit-text-stroke:0.2px currentColor;">-</div>
<div class="t" style="left:1311.84px;top:475.00px;font-size:10.9px;line-height:10.9px;color:#1e1e1e;transform:scaleX(0.9700);transform-origin:0 0;-webkit-text-stroke:0.2px currentColor;">-</div>
<div class="t" style="left:67.90px;top:488.00px;font-size:10.9px;line-height:10.9px;color:#1e1e1e;transform:scaleX(0.9700);transform-origin:0 0;-webkit-text-stroke:0.2px currentColor;">-</div>
<div class="t" style="left:788.68px;top:488.00px;font-size:10.9px;line-height:10.9px;color:#1e1e1e;transform:scaleX(0.9700);transform-origin:0 0;-webkit-text-stroke:0.2px currentColor;">Yes</div>
<div class="t" style="left:906.84px;top:488.00px;font-size:10.9px;line-height:10.9px;color:#1e1e1e;transform:scaleX(0.9700);transform-origin:0 0;-webkit-text-stroke:0.2px currentColor;">-</div>
<div class="t" style="left:987.84px;top:488.00px;font-size:10.9px;line-height:10.9px;color:#1e1e1e;transform:scaleX(0.9700);transform-origin:0 0;-webkit-text-stroke:0.2px currentColor;">-</div>
<div class="t" style="left:1068.84px;top:488.00px;font-size:10.9px;line-height:10.9px;color:#1e1e1e;transform:scaleX(0.9700);transform-origin:0 0;-webkit-text-stroke:0.2px currentColor;">-</div>
<div class="t" style="left:1149.84px;top:488.00px;font-size:10.9px;line-height:10.9px;color:#1e1e1e;transform:scaleX(0.9700);transform-origin:0 0;-webkit-text-stroke:0.2px currentColor;">-</div>
<div class="t" style="left:1230.84px;top:488.00px;font-size:10.9px;line-height:10.9px;color:#1e1e1e;transform:scaleX(0.9700);transform-origin:0 0;-webkit-text-stroke:0.2px currentColor;">-</div>
<div class="t" style="left:1311.84px;top:488.00px;font-size:10.9px;line-height:10.9px;color:#1e1e1e;transform:scaleX(0.9700);transform-origin:0 0;-webkit-text-stroke:0.2px currentColor;">-</div>
<div class="t" style="left:67.90px;top:501.00px;font-size:10.9px;line-height:10.9px;color:#1e1e1e;transform:scaleX(0.9700);transform-origin:0 0;-webkit-text-stroke:0.2px currentColor;">-</div>
<div class="t" style="left:788.68px;top:501.00px;font-size:10.9px;line-height:10.9px;color:#1e1e1e;transform:scaleX(0.9700);transform-origin:0 0;-webkit-text-stroke:0.2px currentColor;">Yes</div>
<div class="t" style="left:906.84px;top:501.00px;font-size:10.9px;line-height:10.9px;color:#1e1e1e;transform:scaleX(0.9700);transform-origin:0 0;-webkit-text-stroke:0.2px currentColor;">-</div>
<div class="t" style="left:987.84px;top:501.00px;font-size:10.9px;line-height:10.9px;color:#1e1e1e;transform:scaleX(0.9700);transform-origin:0 0;-webkit-text-stroke:0.2px currentColor;">-</div>
<div class="t" style="left:1068.84px;top:501.00px;font-size:10.9px;line-height:10.9px;color:#1e1e1e;transform:scaleX(0.9700);transform-origin:0 0;-webkit-text-stroke:0.2px currentColor;">-</div>
<div class="t" style="left:1149.84px;top:501.00px;font-size:10.9px;line-height:10.9px;color:#1e1e1e;transform:scaleX(0.9700);transform-origin:0 0;-webkit-text-stroke:0.2px currentColor;">-</div>
<div class="t" style="left:1230.84px;top:501.00px;font-size:10.9px;line-height:10.9px;color:#1e1e1e;transform:scaleX(0.9700);transform-origin:0 0;-webkit-text-stroke:0.2px currentColor;">-</div>
<div class="t" style="left:1311.84px;top:501.00px;font-size:10.9px;line-height:10.9px;color:#1e1e1e;transform:scaleX(0.9700);transform-origin:0 0;-webkit-text-stroke:0.2px currentColor;">-</div>
<div class="t" style="left:67.90px;top:515.00px;font-size:10.9px;line-height:10.9px;color:#1e1e1e;transform:scaleX(0.9700);transform-origin:0 0;-webkit-text-stroke:0.2px currentColor;">-</div>
<div class="t" style="left:788.68px;top:515.00px;font-size:10.9px;line-height:10.9px;color:#1e1e1e;transform:scaleX(0.9700);transform-origin:0 0;-webkit-text-stroke:0.2px currentColor;">Yes</div>
<div class="t" style="left:906.84px;top:515.00px;font-size:10.9px;line-height:10.9px;color:#1e1e1e;transform:scaleX(0.9700);transform-origin:0 0;-webkit-text-stroke:0.2px currentColor;">-</div>
<div class="t" style="left:987.84px;top:515.00px;font-size:10.9px;line-height:10.9px;color:#1e1e1e;transform:scaleX(0.9700);transform-origin:0 0;-webkit-text-stroke:0.2px currentColor;">-</div>
<div class="t" style="left:1068.84px;top:515.00px;font-size:10.9px;line-height:10.9px;color:#1e1e1e;transform:scaleX(0.9700);transform-origin:0 0;-webkit-text-stroke:0.2px currentColor;">-</div>
<div class="t" style="left:1149.84px;top:515.00px;font-size:10.9px;line-height:10.9px;color:#1e1e1e;transform:scaleX(0.9700);transform-origin:0 0;-webkit-text-stroke:0.2px currentColor;">-</div>
<div class="t" style="left:1230.84px;top:515.00px;font-size:10.9px;line-height:10.9px;color:#1e1e1e;transform:scaleX(0.9700);transform-origin:0 0;-webkit-text-stroke:0.2px currentColor;">-</div>
<div class="t" style="left:1311.84px;top:515.00px;font-size:10.9px;line-height:10.9px;color:#1e1e1e;transform:scaleX(0.9700);transform-origin:0 0;-webkit-text-stroke:0.2px currentColor;">-</div>
<div class="t" style="left:67.90px;top:528.00px;font-size:10.9px;line-height:10.9px;color:#1e1e1e;transform:scaleX(0.9700);transform-origin:0 0;-webkit-text-stroke:0.2px currentColor;">-</div>
<div class="t" style="left:788.68px;top:528.00px;font-size:10.9px;line-height:10.9px;color:#1e1e1e;transform:scaleX(0.9700);transform-origin:0 0;-webkit-text-stroke:0.2px currentColor;">Yes</div>
<div class="t" style="left:906.84px;top:528.00px;font-size:10.9px;line-height:10.9px;color:#1e1e1e;transform:scaleX(0.9700);transform-origin:0 0;-webkit-text-stroke:0.2px currentColor;">-</div>
<div class="t" style="left:987.84px;top:528.00px;font-size:10.9px;line-height:10.9px;color:#1e1e1e;transform:scaleX(0.9700);transform-origin:0 0;-webkit-text-stroke:0.2px currentColor;">-</div>
<div class="t" style="left:1068.84px;top:528.00px;font-size:10.9px;line-height:10.9px;color:#1e1e1e;transform:scaleX(0.9700);transform-origin:0 0;-webkit-text-stroke:0.2px currentColor;">-</div>
<div class="t" style="left:1149.84px;top:528.00px;font-size:10.9px;line-height:10.9px;color:#1e1e1e;transform:scaleX(0.9700);transform-origin:0 0;-webkit-text-stroke:0.2px currentColor;">-</div>
<div class="t" style="left:1230.84px;top:528.00px;font-size:10.9px;line-height:10.9px;color:#1e1e1e;transform:scaleX(0.9700);transform-origin:0 0;-webkit-text-stroke:0.2px currentColor;">-</div>
<div class="t" style="left:1311.84px;top:528.00px;font-size:10.9px;line-height:10.9px;color:#1e1e1e;transform:scaleX(0.9700);transform-origin:0 0;-webkit-text-stroke:0.2px currentColor;">-</div>
<div class="t" style="left:67.90px;top:542.00px;font-size:10.9px;line-height:10.9px;color:#1e1e1e;transform:scaleX(0.9700);transform-origin:0 0;-webkit-text-stroke:0.2px currentColor;">-</div>
<div class="t" style="left:788.68px;top:542.00px;font-size:10.9px;line-height:10.9px;color:#1e1e1e;transform:scaleX(0.9700);transform-origin:0 0;-webkit-text-stroke:0.2px currentColor;">Yes</div>
<div class="t" style="left:906.84px;top:542.00px;font-size:10.9px;line-height:10.9px;color:#1e1e1e;transform:scaleX(0.9700);transform-origin:0 0;-webkit-text-stroke:0.2px currentColor;">-</div>
<div class="t" style="left:987.84px;top:542.00px;font-size:10.9px;line-height:10.9px;color:#1e1e1e;transform:scaleX(0.9700);transform-origin:0 0;-webkit-text-stroke:0.2px currentColor;">-</div>
<div class="t" style="left:1068.84px;top:542.00px;font-size:10.9px;line-height:10.9px;color:#1e1e1e;transform:scaleX(0.9700);transform-origin:0 0;-webkit-text-stroke:0.2px currentColor;">-</div>
<div class="t" style="left:1149.84px;top:542.00px;font-size:10.9px;line-height:10.9px;color:#1e1e1e;transform:scaleX(0.9700);transform-origin:0 0;-webkit-text-stroke:0.2px currentColor;">-</div>
<div class="t" style="left:1230.84px;top:542.00px;font-size:10.9px;line-height:10.9px;color:#1e1e1e;transform:scaleX(0.9700);transform-origin:0 0;-webkit-text-stroke:0.2px currentColor;">-</div>
<div class="t" style="left:1311.84px;top:542.00px;font-size:10.9px;line-height:10.9px;color:#1e1e1e;transform:scaleX(0.9700);transform-origin:0 0;-webkit-text-stroke:0.2px currentColor;">-</div>
<div class="t" style="left:67.90px;top:555.00px;font-size:10.9px;line-height:10.9px;color:#1e1e1e;transform:scaleX(0.9700);transform-origin:0 0;-webkit-text-stroke:0.2px currentColor;">-</div>
<div class="t" style="left:788.68px;top:555.00px;font-size:10.9px;line-height:10.9px;color:#1e1e1e;transform:scaleX(0.9700);transform-origin:0 0;-webkit-text-stroke:0.2px currentColor;">Yes</div>
<div class="t" style="left:906.84px;top:555.00px;font-size:10.9px;line-height:10.9px;color:#1e1e1e;transform:scaleX(0.9700);transform-origin:0 0;-webkit-text-stroke:0.2px currentColor;">-</div>
<div class="t" style="left:987.84px;top:555.00px;font-size:10.9px;line-height:10.9px;color:#1e1e1e;transform:scaleX(0.9700);transform-origin:0 0;-webkit-text-stroke:0.2px currentColor;">-</div>
<div class="t" style="left:1068.84px;top:555.00px;font-size:10.9px;line-height:10.9px;color:#1e1e1e;transform:scaleX(0.9700);transform-origin:0 0;-webkit-text-stroke:0.2px currentColor;">-</div>
<div class="t" style="left:1149.84px;top:555.00px;font-size:10.9px;line-height:10.9px;color:#1e1e1e;transform:scaleX(0.9700);transform-origin:0 0;-webkit-text-stroke:0.2px currentColor;">-</div>
<div class="t" style="left:1230.84px;top:555.00px;font-size:10.9px;line-height:10.9px;color:#1e1e1e;transform:scaleX(0.9700);transform-origin:0 0;-webkit-text-stroke:0.2px currentColor;">-</div>
<div class="t" style="left:1311.84px;top:555.00px;font-size:10.9px;line-height:10.9px;color:#1e1e1e;transform:scaleX(0.9700);transform-origin:0 0;-webkit-text-stroke:0.2px currentColor;">-</div>
<div class="t" style="left:67.90px;top:569.00px;font-size:10.9px;line-height:10.9px;color:#1e1e1e;transform:scaleX(0.9700);transform-origin:0 0;-webkit-text-stroke:0.2px currentColor;">-</div>
<div class="t" style="left:788.68px;top:569.00px;font-size:10.9px;line-height:10.9px;color:#1e1e1e;transform:scaleX(0.9700);transform-origin:0 0;-webkit-text-stroke:0.2px currentColor;">Yes</div>
<div class="t" style="left:906.84px;top:569.00px;font-size:10.9px;line-height:10.9px;color:#1e1e1e;transform:scaleX(0.9700);transform-origin:0 0;-webkit-text-stroke:0.2px currentColor;">-</div>
<div class="t" style="left:987.84px;top:569.00px;font-size:10.9px;line-height:10.9px;color:#1e1e1e;transform:scaleX(0.9700);transform-origin:0 0;-webkit-text-stroke:0.2px currentColor;">-</div>
<div class="t" style="left:1068.84px;top:569.00px;font-size:10.9px;line-height:10.9px;color:#1e1e1e;transform:scaleX(0.9700);transform-origin:0 0;-webkit-text-stroke:0.2px currentColor;">-</div>
<div class="t" style="left:1149.84px;top:569.00px;font-size:10.9px;line-height:10.9px;color:#1e1e1e;transform:scaleX(0.9700);transform-origin:0 0;-webkit-text-stroke:0.2px currentColor;">-</div>
<div class="t" style="left:1230.84px;top:569.00px;font-size:10.9px;line-height:10.9px;color:#1e1e1e;transform:scaleX(0.9700);transform-origin:0 0;-webkit-text-stroke:0.2px currentColor;">-</div>
<div class="t" style="left:1311.84px;top:569.00px;font-size:10.9px;line-height:10.9px;color:#1e1e1e;transform:scaleX(0.9700);transform-origin:0 0;-webkit-text-stroke:0.2px currentColor;">-</div>
<div class="r" style="left:66px;top:580.7px;width:1304.00px;height:16.80px;background:#4cb1e6;"></div>
<div class="t" style="left:69.40px;top:583.00px;font-size:13.8px;line-height:13.8px;font-weight:700;color:#fff;transform:scaleX(1.0645);transform-origin:0 0;-webkit-text-stroke:0.25px currentColor;">Total</div>
<div class="t" style="left:704.70px;top:584.00px;font-size:11px;line-height:11px;font-weight:700;color:#fff;transform:scaleX(1.0700);transform-origin:0 0;-webkit-text-stroke:0.25px currentColor;">69,000</div>
<div class="t" style="left:884.60px;top:584.00px;font-size:11px;line-height:11px;font-weight:700;color:#fff;transform:scaleX(1.0700);transform-origin:0 0;-webkit-text-stroke:0.25px currentColor;">32,667</div>
<div class="t" style="left:965.60px;top:584.00px;font-size:11px;line-height:11px;font-weight:700;color:#fff;transform:scaleX(1.0700);transform-origin:0 0;-webkit-text-stroke:0.25px currentColor;">15,167</div>
<div class="t" style="left:1047.25px;top:584.00px;font-size:11px;line-height:11px;font-weight:700;color:#fff;transform:scaleX(1.0700);transform-origin:0 0;-webkit-text-stroke:0.25px currentColor;">11,167</div>
<div class="t" style="left:1134.15px;top:584.00px;font-size:11px;line-height:11px;font-weight:700;color:#fff;transform:scaleX(1.0700);transform-origin:0 0;-webkit-text-stroke:0.25px currentColor;">3,333</div>
<div class="t" style="left:1215.15px;top:584.00px;font-size:11px;line-height:11px;font-weight:700;color:#fff;transform:scaleX(1.0700);transform-origin:0 0;-webkit-text-stroke:0.25px currentColor;">3,333</div>
<div class="t" style="left:1296.15px;top:584.00px;font-size:11px;line-height:11px;font-weight:700;color:#fff;transform:scaleX(1.0700);transform-origin:0 0;-webkit-text-stroke:0.25px currentColor;">3,333</div>
<div class="t" style="left:45.60px;top:626.00px;font-size:19px;line-height:19px;font-weight:700;color:#1c1c1c;transform:scaleX(1.0317);transform-origin:0 0;-webkit-text-stroke:0.25px currentColor;">Startup Costs Depreciation, $</div>
<div class="r" style="left:66px;top:657.7px;width:1304.00px;height:13.50px;background:#4cb1e6;"></div>
<div class="r" style="left:747px;top:670.2px;width:99.00px;height:1.00px;background:#ffffff;"></div>
<div class="t" style="left:68.50px;top:659.00px;font-size:11px;line-height:11px;font-weight:700;color:#fff;transform:scaleX(1.0106);transform-origin:0 0;-webkit-text-stroke:0.25px currentColor;">Opening Net Book Value</div>
<div class="t" style="left:903.77px;top:659.00px;font-size:11px;line-height:11px;font-weight:700;color:#fff;-webkit-text-stroke:0.25px currentColor;">-</div>
<div class="t" style="left:965.60px;top:659.00px;font-size:11px;line-height:11px;font-weight:700;color:#fff;transform:scaleX(1.0700);transform-origin:0 0;-webkit-text-stroke:0.25px currentColor;">32,394</div>
<div class="t" style="left:1046.60px;top:659.00px;font-size:11px;line-height:11px;font-weight:700;color:#fff;transform:scaleX(1.0700);transform-origin:0 0;-webkit-text-stroke:0.25px currentColor;">47,163</div>
<div class="t" style="left:1127.60px;top:659.00px;font-size:11px;line-height:11px;font-weight:700;color:#fff;transform:scaleX(1.0700);transform-origin:0 0;-webkit-text-stroke:0.25px currentColor;">57,838</div>
<div class="t" style="left:1208.60px;top:659.00px;font-size:11px;line-height:11px;font-weight:700;color:#fff;transform:scaleX(1.0700);transform-origin:0 0;-webkit-text-stroke:0.25px currentColor;">60,651</div>
<div class="t" style="left:1289.60px;top:659.00px;font-size:11px;line-height:11px;font-weight:700;color:#fff;transform:scaleX(1.0700);transform-origin:0 0;-webkit-text-stroke:0.25px currentColor;">63,438</div>
<div class="t" style="left:78.40px;top:673.00px;font-size:10.9px;line-height:10.9px;color:#1e1e1e;transform:scaleX(0.9700);transform-origin:0 0;-webkit-text-stroke:0.2px currentColor;">Expenditure - Amortizable</div>
<div class="t" style="left:825.84px;top:673.00px;font-size:10.9px;line-height:10.9px;color:#1e1e1e;transform:scaleX(0.9700);transform-origin:0 0;-webkit-text-stroke:0.2px currentColor;">-</div>
<div class="t" style="left:889.96px;top:673.00px;font-size:10.9px;line-height:10.9px;color:#1e1e1e;transform:scaleX(0.9700);transform-origin:0 0;-webkit-text-stroke:0.2px currentColor;">32,667</div>
<div class="t" style="left:970.96px;top:673.00px;font-size:10.9px;line-height:10.9px;color:#1e1e1e;transform:scaleX(0.9700);transform-origin:0 0;-webkit-text-stroke:0.2px currentColor;">15,167</div>
<div class="t" style="left:1052.75px;top:673.00px;font-size:10.9px;line-height:10.9px;color:#1e1e1e;transform:scaleX(0.9700);transform-origin:0 0;-webkit-text-stroke:0.2px currentColor;">11,167</div>
<div class="t" style="left:1138.84px;top:673.00px;font-size:10.9px;line-height:10.9px;color:#1e1e1e;transform:scaleX(0.9700);transform-origin:0 0;-webkit-text-stroke:0.2px currentColor;">3,333</div>
<div class="t" style="left:1219.84px;top:673.00px;font-size:10.9px;line-height:10.9px;color:#1e1e1e;transform:scaleX(0.9700);transform-origin:0 0;-webkit-text-stroke:0.2px currentColor;">3,333</div>
<div class="t" style="left:1300.84px;top:673.00px;font-size:10.9px;line-height:10.9px;color:#1e1e1e;transform:scaleX(0.9700);transform-origin:0 0;-webkit-text-stroke:0.2px currentColor;">3,333</div>
<div class="t" style="left:78.40px;top:686.00px;font-size:10.9px;line-height:10.9px;color:#1e1e1e;transform:scaleX(0.9700);transform-origin:0 0;-webkit-text-stroke:0.2px currentColor;">Depreciation (Depreciation Period (Years) - 10)</div>
<div class="t" style="left:904.66px;top:686.00px;font-size:10.9px;line-height:10.9px;color:#1e1e1e;transform:scaleX(0.9700);transform-origin:0 0;-webkit-text-stroke:0.2px currentColor;">272</div>
<div class="t" style="left:985.66px;top:686.00px;font-size:10.9px;line-height:10.9px;color:#1e1e1e;transform:scaleX(0.9700);transform-origin:0 0;-webkit-text-stroke:0.2px currentColor;">399</div>
<div class="t" style="left:1066.66px;top:686.00px;font-size:10.9px;line-height:10.9px;color:#1e1e1e;transform:scaleX(0.9700);transform-origin:0 0;-webkit-text-stroke:0.2px currentColor;">492</div>
<div class="t" style="left:1147.66px;top:686.00px;font-size:10.9px;line-height:10.9px;color:#1e1e1e;transform:scaleX(0.9700);transform-origin:0 0;-webkit-text-stroke:0.2px currentColor;">519</div>
<div class="t" style="left:1228.66px;top:686.00px;font-size:10.9px;line-height:10.9px;color:#1e1e1e;transform:scaleX(0.9700);transform-origin:0 0;-webkit-text-stroke:0.2px currentColor;">547</div>
<div class="t" style="left:1309.66px;top:686.00px;font-size:10.9px;line-height:10.9px;color:#1e1e1e;transform:scaleX(0.9700);transform-origin:0 0;-webkit-text-stroke:0.2px currentColor;">575</div>
<div class="r" style="left:66px;top:698.5px;width:1304.00px;height:13.30px;background:#4cb1e6;"></div>
<div class="t" style="left:68.50px;top:700.00px;font-size:11px;line-height:11px;font-weight:700;color:#fff;-webkit-text-stroke:0.25px currentColor;">Closing Net Book Value</div>
<div class="t" style="left:822.67px;top:700.00px;font-size:11px;line-height:11px;font-weight:700;color:#fff;-webkit-text-stroke:0.25px currentColor;">-</div>
<div class="t" style="left:884.60px;top:700.00px;font-size:11px;line-height:11px;font-weight:700;color:#fff;transform:scaleX(1.0700);transform-origin:0 0;-webkit-text-stroke:0.25px currentColor;">32,394</div>
<div class="t" style="left:965.60px;top:700.00px;font-size:11px;line-height:11px;font-weight:700;color:#fff;transform:scaleX(1.0700);transform-origin:0 0;-webkit-text-stroke:0.25px currentColor;">47,163</div>
<div class="t" style="left:1046.60px;top:700.00px;font-size:11px;line-height:11px;font-weight:700;color:#fff;transform:scaleX(1.0700);transform-origin:0 0;-webkit-text-stroke:0.25px currentColor;">57,838</div>
<div class="t" style="left:1127.60px;top:700.00px;font-size:11px;line-height:11px;font-weight:700;color:#fff;transform:scaleX(1.0700);transform-origin:0 0;-webkit-text-stroke:0.25px currentColor;">60,651</div>
<div class="t" style="left:1208.60px;top:700.00px;font-size:11px;line-height:11px;font-weight:700;color:#fff;transform:scaleX(1.0700);transform-origin:0 0;-webkit-text-stroke:0.25px currentColor;">63,438</div>
<div class="t" style="left:1289.60px;top:700.00px;font-size:11px;line-height:11px;font-weight:700;color:#fff;transform:scaleX(1.0700);transform-origin:0 0;-webkit-text-stroke:0.25px currentColor;">66,196</div>
<div class="r" style="left:66px;top:731.8px;width:1304.00px;height:13.00px;background:#4cb1e6;"></div>
<div class="r" style="left:747px;top:743.8px;width:99.00px;height:1.00px;background:#ffffff;"></div>
<div class="t" style="left:68.50px;top:733.00px;font-size:11px;line-height:11px;font-weight:700;color:#fff;transform:scaleX(1.0106);transform-origin:0 0;-webkit-text-stroke:0.25px currentColor;">Opening Net Book Value</div>
<div class="t" style="left:903.77px;top:733.00px;font-size:11px;line-height:11px;font-weight:700;color:#fff;-webkit-text-stroke:0.25px currentColor;">-</div>
<div class="t" style="left:984.77px;top:733.00px;font-size:11px;line-height:11px;font-weight:700;color:#fff;-webkit-text-stroke:0.25px currentColor;">-</div>
<div class="t" style="left:1065.77px;top:733.00px;font-size:11px;line-height:11px;font-weight:700;color:#fff;-webkit-text-stroke:0.25px currentColor;">-</div>
<div class="t" style="left:1146.77px;top:733.00px;font-size:11px;line-height:11px;font-weight:700;color:#fff;-webkit-text-stroke:0.25px currentColor;">-</div>
<div class="t" style="left:1227.77px;top:733.00px;font-size:11px;line-height:11px;font-weight:700;color:#fff;-webkit-text-stroke:0.25px currentColor;">-</div>
<div class="t" style="left:1308.77px;top:733.00px;font-size:11px;line-height:11px;font-weight:700;color:#fff;-webkit-text-stroke:0.25px currentColor;">-</div>
<div class="t" style="left:78.40px;top:746.00px;font-size:10.9px;line-height:10.9px;color:#1e1e1e;transform:scaleX(0.9700);transform-origin:0 0;-webkit-text-stroke:0.2px currentColor;">Expenditure - Non-Amortizable</div>
<div class="t" style="left:906.84px;top:746.00px;font-size:10.9px;line-height:10.9px;color:#1e1e1e;transform:scaleX(0.9700);transform-origin:0 0;-webkit-text-stroke:0.2px currentColor;">-</div>
<div class="t" style="left:987.84px;top:746.00px;font-size:10.9px;line-height:10.9px;color:#1e1e1e;transform:scaleX(0.9700);transform-origin:0 0;-webkit-text-stroke:0.2px currentColor;">-</div>
<div class="t" style="left:1068.84px;top:746.00px;font-size:10.9px;line-height:10.9px;color:#1e1e1e;transform:scaleX(0.9700);transform-origin:0 0;-webkit-text-stroke:0.2px currentColor;">-</div>
<div class="t" style="left:1149.84px;top:746.00px;font-size:10.9px;line-height:10.9px;color:#1e1e1e;transform:scaleX(0.9700);transform-origin:0 0;-webkit-text-stroke:0.2px currentColor;">-</div>
<div class="t" style="left:1230.84px;top:746.00px;font-size:10.9px;line-height:10.9px;color:#1e1e1e;transform:scaleX(0.9700);transform-origin:0 0;-webkit-text-stroke:0.2px currentColor;">-</div>
<div class="t" style="left:1311.84px;top:746.00px;font-size:10.9px;line-height:10.9px;color:#1e1e1e;transform:scaleX(0.9700);transform-origin:0 0;-webkit-text-stroke:0.2px currentColor;">-</div>
<div class="r" style="left:66px;top:758.3px;width:1304.00px;height:13.70px;background:#4cb1e6;"></div>
<div class="t" style="left:68.50px;top:760.00px;font-size:11px;line-height:11px;font-weight:700;color:#fff;-webkit-text-stroke:0.25px currentColor;">Closing Net Book Value</div>
<div class="t" style="left:903.77px;top:760.00px;font-size:11px;line-height:11px;font-weight:700;color:#fff;-webkit-text-stroke:0.25px currentColor;">-</div>
<div class="t" style="left:984.77px;top:760.00px;font-size:11px;line-height:11px;font-weight:700;color:#fff;-webkit-text-stroke:0.25px currentColor;">-</div>
<div class="t" style="left:1065.77px;top:760.00px;font-size:11px;line-height:11px;font-weight:700;color:#fff;-webkit-text-stroke:0.25px currentColor;">-</div>
<div class="t" style="left:1146.77px;top:760.00px;font-size:11px;line-height:11px;font-weight:700;color:#fff;-webkit-text-stroke:0.25px currentColor;">-</div>
<div class="t" style="left:1227.77px;top:760.00px;font-size:11px;line-height:11px;font-weight:700;color:#fff;-webkit-text-stroke:0.25px currentColor;">-</div>
<div class="t" style="left:1308.77px;top:760.00px;font-size:11px;line-height:11px;font-weight:700;color:#fff;-webkit-text-stroke:0.25px currentColor;">-</div>
</div></body></html>
